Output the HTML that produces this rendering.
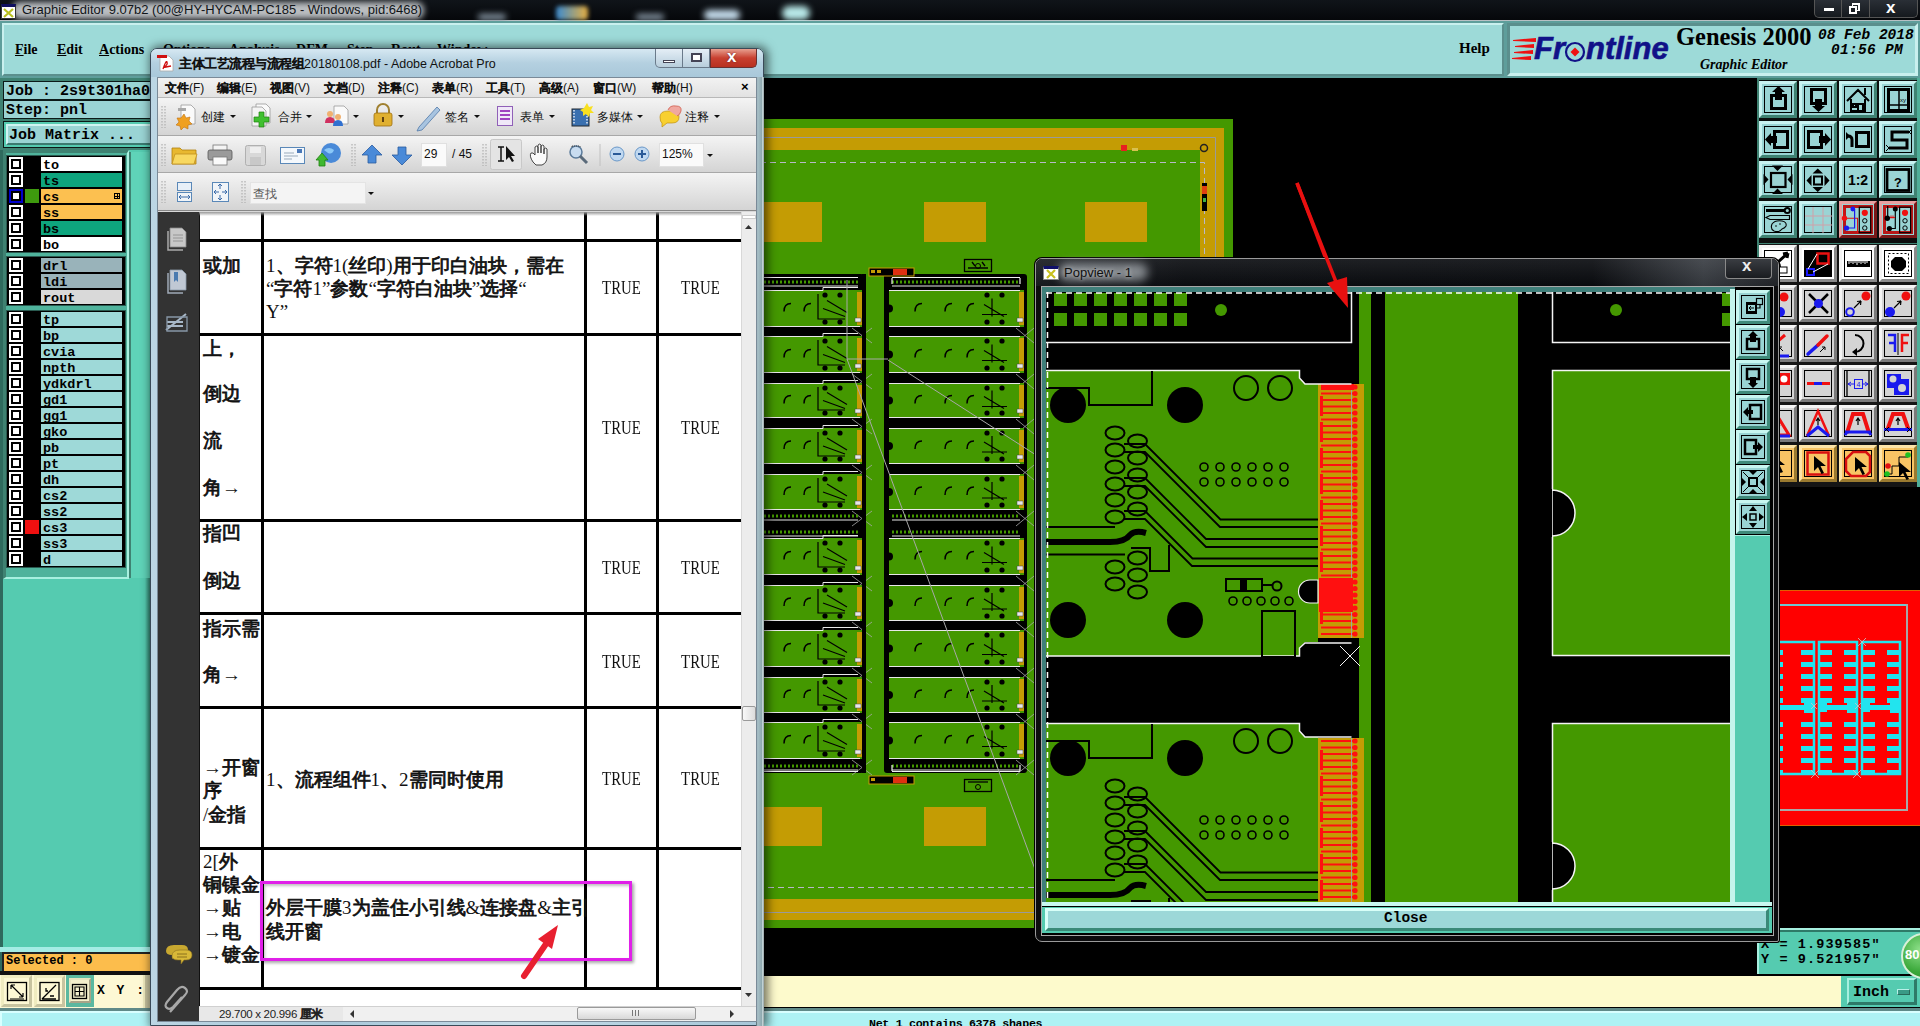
<!DOCTYPE html>
<html><head><meta charset="utf-8">
<style>
*{box-sizing:border-box;margin:0;padding:0}
html,body{width:1920px;height:1026px;overflow:hidden;background:#000;position:relative;font-family:"Liberation Sans",sans-serif}
.a{position:absolute}
.mono{font-family:"Liberation Mono",monospace;font-weight:bold}
.serif{font-family:"Liberation Serif",serif}
.nw{white-space:nowrap}
.c{display:inline-block;width:1em;font-style:normal;text-align:center;-webkit-text-stroke:0.8px currentColor;font-family:"Liberation Sans",sans-serif}
</style></head><body>

<!-- ===== main canvas svg ===== -->
<svg class="a" style="left:0;top:0" width="1920" height="1026" viewBox="0 0 1920 1026">
  <rect x="0" y="0" width="1920" height="1026" fill="#000"/>
  <!-- main board -->
<rect x="600" y="119" width="633" height="809" fill="#449800"/>
<rect x="600" y="128" width="624" height="22" fill="#c49c04"/>
<rect x="1200" y="128" width="24" height="792" fill="#c49c04"/>
<rect x="600" y="899" width="624" height="21" fill="#c49c04"/>
<path d="M600 137.5 H1215.5 V912.5 H600" fill="none" stroke="#9a9a9a" stroke-width="1"/>
<path d="M600 162.5 H1204.5 V887.5 H600" fill="none" stroke="#b8b8c8" stroke-width="1" stroke-dasharray="6 4"/>
<rect x="760" y="202" width="62" height="40" fill="#c49c04"/>
<rect x="924" y="202" width="62" height="40" fill="#c49c04"/>
<rect x="1085" y="202" width="62" height="40" fill="#c49c04"/>
<rect x="760" y="807" width="62" height="39" fill="#c49c04"/>
<rect x="924" y="807" width="62" height="39" fill="#c49c04"/>
<rect x="1085" y="807" width="62" height="39" fill="#c49c04"/>
<rect x="1121" y="145" width="6" height="6" fill="#e82020"/><rect x="1132" y="148" width="6" height="3" fill="#d8c050"/>
<circle cx="1204" cy="148" r="3.5" fill="none" stroke="#222" stroke-width="1.5"/>
<rect x="1202" y="183" width="5" height="28" fill="#000"/><rect x="1202" y="186" width="5" height="8" fill="#e04010"/><rect x="1203" y="198" width="3" height="4" fill="#40b040"/>
<rect x="600" y="274" width="264" height="499" fill="#000" rx="3"/>
<rect x="884" y="274" width="143" height="499" fill="#000" rx="3"/>
<rect x="866" y="274" width="18" height="499" fill="#449800"/>
<rect x="600" y="290" width="262" height="37" fill="#449800"/>
<rect x="889" y="290" width="135" height="37" fill="#449800"/>
<rect x="857" y="292" width="5" height="33" fill="#c49c04"/>
<rect x="1019" y="292" width="5" height="33" fill="#c49c04"/>
<path d="M600 290.5 H823 M823 290.5 v-3 M823 287.5 H858 M889 290.5 H1020 M600 326.5 H860 M889 326.5 H1020" stroke="#e8e8e8" stroke-width="1" fill="none"/>
<path d="M791.0 303.5 Q784.0 303.5 784.0 311.5" fill="none" stroke="#000" stroke-width="1.5"/>
<path d="M811.0 303.5 Q804.0 303.5 804.0 311.5" fill="none" stroke="#000" stroke-width="1.5"/>
<path d="M922.0 303.5 Q915.0 303.5 915.0 311.5" fill="none" stroke="#000" stroke-width="1.5"/>
<path d="M952.0 303.5 Q945.0 303.5 945.0 311.5" fill="none" stroke="#000" stroke-width="1.5"/>
<path d="M974.0 303.5 Q967.0 303.5 967.0 311.5" fill="none" stroke="#000" stroke-width="1.5"/>
<circle cx="825" cy="295" r="2.6" fill="#000"/><circle cx="825" cy="322" r="2.6" fill="#000"/>
<circle cx="840" cy="295" r="2.6" fill="#000"/><circle cx="840" cy="322" r="2.6" fill="#000"/>
<circle cx="987" cy="295" r="2.6" fill="#000"/><circle cx="987" cy="322" r="2.6" fill="#000"/>
<circle cx="1002" cy="295" r="2.6" fill="#000"/><circle cx="1002" cy="322" r="2.6" fill="#000"/>
<path d="M818 294 V319 H845 M823 308.5 L845 316.5 M827 300.5 L847 312.5 M982 314.5 H1007 M984 304.5 L1004 316.5 M992 298.5 V316.5" fill="none" stroke="#000" stroke-width="1.2"/>
<path d="M855 318 h6 v4 h-6z M1017 318 h6 v4 h-6z" fill="#e8e8e8" stroke="#444" stroke-width="0.5"/>
<circle cx="889" cy="308.5" r="4" fill="#000"/>
<path d="M852 328 L872 343 M852 343 L872 328 M1016 328 L1034 343 M1016 343 L1034 328" stroke="#aaa" stroke-width="0.8"/>
<rect x="600" y="336" width="262" height="37" fill="#449800"/>
<rect x="889" y="336" width="135" height="37" fill="#449800"/>
<rect x="857" y="338" width="5" height="33" fill="#c49c04"/>
<rect x="1019" y="338" width="5" height="33" fill="#c49c04"/>
<path d="M600 336.5 H823 M823 336.5 v-3 M823 333.5 H858 M889 336.5 H1020 M600 372.5 H860 M889 372.5 H1020" stroke="#e8e8e8" stroke-width="1" fill="none"/>
<path d="M791.0 349.5 Q784.0 349.5 784.0 357.5" fill="none" stroke="#000" stroke-width="1.5"/>
<path d="M811.0 349.5 Q804.0 349.5 804.0 357.5" fill="none" stroke="#000" stroke-width="1.5"/>
<path d="M922.0 349.5 Q915.0 349.5 915.0 357.5" fill="none" stroke="#000" stroke-width="1.5"/>
<path d="M952.0 349.5 Q945.0 349.5 945.0 357.5" fill="none" stroke="#000" stroke-width="1.5"/>
<path d="M974.0 349.5 Q967.0 349.5 967.0 357.5" fill="none" stroke="#000" stroke-width="1.5"/>
<circle cx="825" cy="341" r="2.6" fill="#000"/><circle cx="825" cy="368" r="2.6" fill="#000"/>
<circle cx="840" cy="341" r="2.6" fill="#000"/><circle cx="840" cy="368" r="2.6" fill="#000"/>
<circle cx="987" cy="341" r="2.6" fill="#000"/><circle cx="987" cy="368" r="2.6" fill="#000"/>
<circle cx="1002" cy="341" r="2.6" fill="#000"/><circle cx="1002" cy="368" r="2.6" fill="#000"/>
<path d="M818 340 V365 H845 M823 354.5 L845 362.5 M827 346.5 L847 358.5 M982 360.5 H1007 M984 350.5 L1004 362.5 M992 344.5 V362.5" fill="none" stroke="#000" stroke-width="1.2"/>
<path d="M855 364 h6 v4 h-6z M1017 364 h6 v4 h-6z" fill="#e8e8e8" stroke="#444" stroke-width="0.5"/>
<circle cx="889" cy="354.5" r="4" fill="#000"/>
<path d="M852 374 L872 389 M852 389 L872 374 M1016 374 L1034 389 M1016 389 L1034 374" stroke="#aaa" stroke-width="0.8"/>
<rect x="600" y="383" width="262" height="35" fill="#449800"/>
<rect x="889" y="383" width="135" height="35" fill="#449800"/>
<rect x="857" y="385" width="5" height="31" fill="#c49c04"/>
<rect x="1019" y="385" width="5" height="31" fill="#c49c04"/>
<path d="M600 383.5 H823 M823 383.5 v-3 M823 380.5 H858 M889 383.5 H1020 M600 417.5 H860 M889 417.5 H1020" stroke="#e8e8e8" stroke-width="1" fill="none"/>
<path d="M791.0 395.5 Q784.0 395.5 784.0 403.5" fill="none" stroke="#000" stroke-width="1.5"/>
<path d="M811.0 395.5 Q804.0 395.5 804.0 403.5" fill="none" stroke="#000" stroke-width="1.5"/>
<path d="M922.0 395.5 Q915.0 395.5 915.0 403.5" fill="none" stroke="#000" stroke-width="1.5"/>
<path d="M952.0 395.5 Q945.0 395.5 945.0 403.5" fill="none" stroke="#000" stroke-width="1.5"/>
<path d="M974.0 395.5 Q967.0 395.5 967.0 403.5" fill="none" stroke="#000" stroke-width="1.5"/>
<circle cx="825" cy="388" r="2.6" fill="#000"/><circle cx="825" cy="413" r="2.6" fill="#000"/>
<circle cx="840" cy="388" r="2.6" fill="#000"/><circle cx="840" cy="413" r="2.6" fill="#000"/>
<circle cx="987" cy="388" r="2.6" fill="#000"/><circle cx="987" cy="413" r="2.6" fill="#000"/>
<circle cx="1002" cy="388" r="2.6" fill="#000"/><circle cx="1002" cy="413" r="2.6" fill="#000"/>
<path d="M818 387 V410 H845 M823 400.5 L845 408.5 M827 392.5 L847 404.5 M982 406.5 H1007 M984 396.5 L1004 408.5 M992 390.5 V408.5" fill="none" stroke="#000" stroke-width="1.2"/>
<path d="M855 409 h6 v4 h-6z M1017 409 h6 v4 h-6z" fill="#e8e8e8" stroke="#444" stroke-width="0.5"/>
<circle cx="889" cy="400.5" r="4" fill="#000"/>
<path d="M852 419 L872 434 M852 434 L872 419 M1016 419 L1034 434 M1016 434 L1034 419" stroke="#aaa" stroke-width="0.8"/>
<rect x="600" y="428" width="262" height="36" fill="#449800"/>
<rect x="889" y="428" width="135" height="36" fill="#449800"/>
<rect x="857" y="430" width="5" height="32" fill="#c49c04"/>
<rect x="1019" y="430" width="5" height="32" fill="#c49c04"/>
<path d="M600 428.5 H823 M823 428.5 v-3 M823 425.5 H858 M889 428.5 H1020 M600 463.5 H860 M889 463.5 H1020" stroke="#e8e8e8" stroke-width="1" fill="none"/>
<path d="M791.0 441.0 Q784.0 441.0 784.0 449.0" fill="none" stroke="#000" stroke-width="1.5"/>
<path d="M811.0 441.0 Q804.0 441.0 804.0 449.0" fill="none" stroke="#000" stroke-width="1.5"/>
<path d="M922.0 441.0 Q915.0 441.0 915.0 449.0" fill="none" stroke="#000" stroke-width="1.5"/>
<path d="M952.0 441.0 Q945.0 441.0 945.0 449.0" fill="none" stroke="#000" stroke-width="1.5"/>
<path d="M974.0 441.0 Q967.0 441.0 967.0 449.0" fill="none" stroke="#000" stroke-width="1.5"/>
<circle cx="825" cy="433" r="2.6" fill="#000"/><circle cx="825" cy="459" r="2.6" fill="#000"/>
<circle cx="840" cy="433" r="2.6" fill="#000"/><circle cx="840" cy="459" r="2.6" fill="#000"/>
<circle cx="987" cy="433" r="2.6" fill="#000"/><circle cx="987" cy="459" r="2.6" fill="#000"/>
<circle cx="1002" cy="433" r="2.6" fill="#000"/><circle cx="1002" cy="459" r="2.6" fill="#000"/>
<path d="M818 432 V456 H845 M823 446.0 L845 454.0 M827 438.0 L847 450.0 M982 452.0 H1007 M984 442.0 L1004 454.0 M992 436.0 V454.0" fill="none" stroke="#000" stroke-width="1.2"/>
<path d="M855 455 h6 v4 h-6z M1017 455 h6 v4 h-6z" fill="#e8e8e8" stroke="#444" stroke-width="0.5"/>
<circle cx="889" cy="446.0" r="4" fill="#000"/>
<path d="M852 465 L872 480 M852 480 L872 465 M1016 465 L1034 480 M1016 480 L1034 465" stroke="#aaa" stroke-width="0.8"/>
<rect x="600" y="474" width="262" height="36" fill="#449800"/>
<rect x="889" y="474" width="135" height="36" fill="#449800"/>
<rect x="857" y="476" width="5" height="32" fill="#c49c04"/>
<rect x="1019" y="476" width="5" height="32" fill="#c49c04"/>
<path d="M600 474.5 H823 M823 474.5 v-3 M823 471.5 H858 M889 474.5 H1020 M600 509.5 H860 M889 509.5 H1020" stroke="#e8e8e8" stroke-width="1" fill="none"/>
<path d="M791.0 487.0 Q784.0 487.0 784.0 495.0" fill="none" stroke="#000" stroke-width="1.5"/>
<path d="M811.0 487.0 Q804.0 487.0 804.0 495.0" fill="none" stroke="#000" stroke-width="1.5"/>
<path d="M922.0 487.0 Q915.0 487.0 915.0 495.0" fill="none" stroke="#000" stroke-width="1.5"/>
<path d="M952.0 487.0 Q945.0 487.0 945.0 495.0" fill="none" stroke="#000" stroke-width="1.5"/>
<path d="M974.0 487.0 Q967.0 487.0 967.0 495.0" fill="none" stroke="#000" stroke-width="1.5"/>
<circle cx="825" cy="479" r="2.6" fill="#000"/><circle cx="825" cy="505" r="2.6" fill="#000"/>
<circle cx="840" cy="479" r="2.6" fill="#000"/><circle cx="840" cy="505" r="2.6" fill="#000"/>
<circle cx="987" cy="479" r="2.6" fill="#000"/><circle cx="987" cy="505" r="2.6" fill="#000"/>
<circle cx="1002" cy="479" r="2.6" fill="#000"/><circle cx="1002" cy="505" r="2.6" fill="#000"/>
<path d="M818 478 V502 H845 M823 492.0 L845 500.0 M827 484.0 L847 496.0 M982 498.0 H1007 M984 488.0 L1004 500.0 M992 482.0 V500.0" fill="none" stroke="#000" stroke-width="1.2"/>
<path d="M855 501 h6 v4 h-6z M1017 501 h6 v4 h-6z" fill="#e8e8e8" stroke="#444" stroke-width="0.5"/>
<circle cx="889" cy="492.0" r="4" fill="#000"/>
<path d="M852 511 L872 526 M852 526 L872 511 M1016 511 L1034 526 M1016 526 L1034 511" stroke="#aaa" stroke-width="0.8"/>
<rect x="600" y="538" width="262" height="37" fill="#449800"/>
<rect x="889" y="538" width="135" height="37" fill="#449800"/>
<rect x="857" y="540" width="5" height="33" fill="#c49c04"/>
<rect x="1019" y="540" width="5" height="33" fill="#c49c04"/>
<path d="M600 538.5 H823 M823 538.5 v-3 M823 535.5 H858 M889 538.5 H1020 M600 574.5 H860 M889 574.5 H1020" stroke="#e8e8e8" stroke-width="1" fill="none"/>
<path d="M791.0 551.5 Q784.0 551.5 784.0 559.5" fill="none" stroke="#000" stroke-width="1.5"/>
<path d="M811.0 551.5 Q804.0 551.5 804.0 559.5" fill="none" stroke="#000" stroke-width="1.5"/>
<path d="M922.0 551.5 Q915.0 551.5 915.0 559.5" fill="none" stroke="#000" stroke-width="1.5"/>
<path d="M952.0 551.5 Q945.0 551.5 945.0 559.5" fill="none" stroke="#000" stroke-width="1.5"/>
<path d="M974.0 551.5 Q967.0 551.5 967.0 559.5" fill="none" stroke="#000" stroke-width="1.5"/>
<circle cx="825" cy="543" r="2.6" fill="#000"/><circle cx="825" cy="570" r="2.6" fill="#000"/>
<circle cx="840" cy="543" r="2.6" fill="#000"/><circle cx="840" cy="570" r="2.6" fill="#000"/>
<circle cx="987" cy="543" r="2.6" fill="#000"/><circle cx="987" cy="570" r="2.6" fill="#000"/>
<circle cx="1002" cy="543" r="2.6" fill="#000"/><circle cx="1002" cy="570" r="2.6" fill="#000"/>
<path d="M818 542 V567 H845 M823 556.5 L845 564.5 M827 548.5 L847 560.5 M982 562.5 H1007 M984 552.5 L1004 564.5 M992 546.5 V564.5" fill="none" stroke="#000" stroke-width="1.2"/>
<path d="M855 566 h6 v4 h-6z M1017 566 h6 v4 h-6z" fill="#e8e8e8" stroke="#444" stroke-width="0.5"/>
<circle cx="889" cy="556.5" r="4" fill="#000"/>
<path d="M852 576 L872 591 M852 591 L872 576 M1016 576 L1034 591 M1016 591 L1034 576" stroke="#aaa" stroke-width="0.8"/>
<rect x="600" y="585" width="262" height="36" fill="#449800"/>
<rect x="889" y="585" width="135" height="36" fill="#449800"/>
<rect x="857" y="587" width="5" height="32" fill="#c49c04"/>
<rect x="1019" y="587" width="5" height="32" fill="#c49c04"/>
<path d="M600 585.5 H823 M823 585.5 v-3 M823 582.5 H858 M889 585.5 H1020 M600 620.5 H860 M889 620.5 H1020" stroke="#e8e8e8" stroke-width="1" fill="none"/>
<path d="M791.0 598.0 Q784.0 598.0 784.0 606.0" fill="none" stroke="#000" stroke-width="1.5"/>
<path d="M811.0 598.0 Q804.0 598.0 804.0 606.0" fill="none" stroke="#000" stroke-width="1.5"/>
<path d="M922.0 598.0 Q915.0 598.0 915.0 606.0" fill="none" stroke="#000" stroke-width="1.5"/>
<path d="M952.0 598.0 Q945.0 598.0 945.0 606.0" fill="none" stroke="#000" stroke-width="1.5"/>
<path d="M974.0 598.0 Q967.0 598.0 967.0 606.0" fill="none" stroke="#000" stroke-width="1.5"/>
<circle cx="825" cy="590" r="2.6" fill="#000"/><circle cx="825" cy="616" r="2.6" fill="#000"/>
<circle cx="840" cy="590" r="2.6" fill="#000"/><circle cx="840" cy="616" r="2.6" fill="#000"/>
<circle cx="987" cy="590" r="2.6" fill="#000"/><circle cx="987" cy="616" r="2.6" fill="#000"/>
<circle cx="1002" cy="590" r="2.6" fill="#000"/><circle cx="1002" cy="616" r="2.6" fill="#000"/>
<path d="M818 589 V613 H845 M823 603.0 L845 611.0 M827 595.0 L847 607.0 M982 609.0 H1007 M984 599.0 L1004 611.0 M992 593.0 V611.0" fill="none" stroke="#000" stroke-width="1.2"/>
<path d="M855 612 h6 v4 h-6z M1017 612 h6 v4 h-6z" fill="#e8e8e8" stroke="#444" stroke-width="0.5"/>
<circle cx="889" cy="603.0" r="4" fill="#000"/>
<path d="M852 622 L872 637 M852 637 L872 622 M1016 622 L1034 637 M1016 637 L1034 622" stroke="#aaa" stroke-width="0.8"/>
<rect x="600" y="630" width="262" height="37" fill="#449800"/>
<rect x="889" y="630" width="135" height="37" fill="#449800"/>
<rect x="857" y="632" width="5" height="33" fill="#c49c04"/>
<rect x="1019" y="632" width="5" height="33" fill="#c49c04"/>
<path d="M600 630.5 H823 M823 630.5 v-3 M823 627.5 H858 M889 630.5 H1020 M600 666.5 H860 M889 666.5 H1020" stroke="#e8e8e8" stroke-width="1" fill="none"/>
<path d="M791.0 643.5 Q784.0 643.5 784.0 651.5" fill="none" stroke="#000" stroke-width="1.5"/>
<path d="M811.0 643.5 Q804.0 643.5 804.0 651.5" fill="none" stroke="#000" stroke-width="1.5"/>
<path d="M922.0 643.5 Q915.0 643.5 915.0 651.5" fill="none" stroke="#000" stroke-width="1.5"/>
<path d="M952.0 643.5 Q945.0 643.5 945.0 651.5" fill="none" stroke="#000" stroke-width="1.5"/>
<path d="M974.0 643.5 Q967.0 643.5 967.0 651.5" fill="none" stroke="#000" stroke-width="1.5"/>
<circle cx="825" cy="635" r="2.6" fill="#000"/><circle cx="825" cy="662" r="2.6" fill="#000"/>
<circle cx="840" cy="635" r="2.6" fill="#000"/><circle cx="840" cy="662" r="2.6" fill="#000"/>
<circle cx="987" cy="635" r="2.6" fill="#000"/><circle cx="987" cy="662" r="2.6" fill="#000"/>
<circle cx="1002" cy="635" r="2.6" fill="#000"/><circle cx="1002" cy="662" r="2.6" fill="#000"/>
<path d="M818 634 V659 H845 M823 648.5 L845 656.5 M827 640.5 L847 652.5 M982 654.5 H1007 M984 644.5 L1004 656.5 M992 638.5 V656.5" fill="none" stroke="#000" stroke-width="1.2"/>
<path d="M855 658 h6 v4 h-6z M1017 658 h6 v4 h-6z" fill="#e8e8e8" stroke="#444" stroke-width="0.5"/>
<circle cx="889" cy="648.5" r="4" fill="#000"/>
<path d="M852 668 L872 683 M852 683 L872 668 M1016 668 L1034 683 M1016 683 L1034 668" stroke="#aaa" stroke-width="0.8"/>
<rect x="600" y="677" width="262" height="36" fill="#449800"/>
<rect x="889" y="677" width="135" height="36" fill="#449800"/>
<rect x="857" y="679" width="5" height="32" fill="#c49c04"/>
<rect x="1019" y="679" width="5" height="32" fill="#c49c04"/>
<path d="M600 677.5 H823 M823 677.5 v-3 M823 674.5 H858 M889 677.5 H1020 M600 712.5 H860 M889 712.5 H1020" stroke="#e8e8e8" stroke-width="1" fill="none"/>
<path d="M791.0 690.0 Q784.0 690.0 784.0 698.0" fill="none" stroke="#000" stroke-width="1.5"/>
<path d="M811.0 690.0 Q804.0 690.0 804.0 698.0" fill="none" stroke="#000" stroke-width="1.5"/>
<path d="M922.0 690.0 Q915.0 690.0 915.0 698.0" fill="none" stroke="#000" stroke-width="1.5"/>
<path d="M952.0 690.0 Q945.0 690.0 945.0 698.0" fill="none" stroke="#000" stroke-width="1.5"/>
<path d="M974.0 690.0 Q967.0 690.0 967.0 698.0" fill="none" stroke="#000" stroke-width="1.5"/>
<circle cx="825" cy="682" r="2.6" fill="#000"/><circle cx="825" cy="708" r="2.6" fill="#000"/>
<circle cx="840" cy="682" r="2.6" fill="#000"/><circle cx="840" cy="708" r="2.6" fill="#000"/>
<circle cx="987" cy="682" r="2.6" fill="#000"/><circle cx="987" cy="708" r="2.6" fill="#000"/>
<circle cx="1002" cy="682" r="2.6" fill="#000"/><circle cx="1002" cy="708" r="2.6" fill="#000"/>
<path d="M818 681 V705 H845 M823 695.0 L845 703.0 M827 687.0 L847 699.0 M982 701.0 H1007 M984 691.0 L1004 703.0 M992 685.0 V703.0" fill="none" stroke="#000" stroke-width="1.2"/>
<path d="M855 704 h6 v4 h-6z M1017 704 h6 v4 h-6z" fill="#e8e8e8" stroke="#444" stroke-width="0.5"/>
<circle cx="889" cy="695.0" r="4" fill="#000"/>
<path d="M852 714 L872 729 M852 729 L872 714 M1016 714 L1034 729 M1016 729 L1034 714" stroke="#aaa" stroke-width="0.8"/>
<rect x="600" y="722" width="262" height="37" fill="#449800"/>
<rect x="889" y="722" width="135" height="37" fill="#449800"/>
<rect x="857" y="724" width="5" height="33" fill="#c49c04"/>
<rect x="1019" y="724" width="5" height="33" fill="#c49c04"/>
<path d="M600 722.5 H823 M823 722.5 v-3 M823 719.5 H858 M889 722.5 H1020 M600 758.5 H860 M889 758.5 H1020" stroke="#e8e8e8" stroke-width="1" fill="none"/>
<path d="M791.0 735.5 Q784.0 735.5 784.0 743.5" fill="none" stroke="#000" stroke-width="1.5"/>
<path d="M811.0 735.5 Q804.0 735.5 804.0 743.5" fill="none" stroke="#000" stroke-width="1.5"/>
<path d="M922.0 735.5 Q915.0 735.5 915.0 743.5" fill="none" stroke="#000" stroke-width="1.5"/>
<path d="M952.0 735.5 Q945.0 735.5 945.0 743.5" fill="none" stroke="#000" stroke-width="1.5"/>
<path d="M974.0 735.5 Q967.0 735.5 967.0 743.5" fill="none" stroke="#000" stroke-width="1.5"/>
<circle cx="825" cy="727" r="2.6" fill="#000"/><circle cx="825" cy="754" r="2.6" fill="#000"/>
<circle cx="840" cy="727" r="2.6" fill="#000"/><circle cx="840" cy="754" r="2.6" fill="#000"/>
<circle cx="987" cy="727" r="2.6" fill="#000"/><circle cx="987" cy="754" r="2.6" fill="#000"/>
<circle cx="1002" cy="727" r="2.6" fill="#000"/><circle cx="1002" cy="754" r="2.6" fill="#000"/>
<path d="M818 726 V751 H845 M823 740.5 L845 748.5 M827 732.5 L847 744.5 M982 746.5 H1007 M984 736.5 L1004 748.5 M992 730.5 V748.5" fill="none" stroke="#000" stroke-width="1.2"/>
<path d="M855 750 h6 v4 h-6z M1017 750 h6 v4 h-6z" fill="#e8e8e8" stroke="#444" stroke-width="0.5"/>
<circle cx="889" cy="740.5" r="4" fill="#000"/>
<path d="M852 760 L872 775 M852 775 L872 760 M1016 760 L1034 775 M1016 775 L1034 760" stroke="#aaa" stroke-width="0.8"/>
<path d="M604 282 H858 M892 282 H1020" stroke="#449800" stroke-width="3" stroke-dasharray="2 2"/>
<path d="M604 286 H858 M892 286 H1020" stroke="#e8e8e8" stroke-width="1"/>
<path d="M604 516 H858 M892 516 H1020" stroke="#449800" stroke-width="3" stroke-dasharray="2 2"/>
<path d="M604 520 H858 M892 520 H1020" stroke="#e8e8e8" stroke-width="1"/>
<path d="M604 532 H858 M892 532 H1020" stroke="#449800" stroke-width="3" stroke-dasharray="2 2"/>
<path d="M604 536 H858 M892 536 H1020" stroke="#e8e8e8" stroke-width="1"/>
<path d="M604 766 H858 M892 766 H1020" stroke="#449800" stroke-width="3" stroke-dasharray="2 2"/>
<path d="M604 770 H858 M892 770 H1020" stroke="#e8e8e8" stroke-width="1"/>
<rect x="862" y="274" width="4" height="499" fill="#000"/>
<rect x="869" y="268" width="45" height="8" fill="#000" stroke="#c49c04" stroke-width="1"/><rect x="871" y="270" width="4" height="3" fill="#c49c04"/><rect x="877" y="270" width="4" height="3" fill="#c49c04"/><rect x="893" y="269" width="14" height="6" fill="#e03010"/>
<rect x="869" y="776" width="45" height="8" fill="#000" stroke="#c49c04" stroke-width="1"/><rect x="871" y="778" width="4" height="3" fill="#c49c04"/><rect x="893" y="777" width="14" height="6" fill="#e03010"/>
<rect x="964.5" y="259.5" width="27" height="12" fill="none" stroke="#000" stroke-width="1.3"/><path d="M968 268 h20 M972 262 l3 4 M982 262 l3 4" stroke="#000" stroke-width="1.3"/><circle cx="978" cy="266" r="2.5" fill="none" stroke="#000"/>
<rect x="964.5" y="779.5" width="27" height="12" fill="none" stroke="#000" stroke-width="1.3"/><path d="M968 782 h20" stroke="#000" stroke-width="1.3"/><circle cx="978" cy="787" r="2.5" fill="none" stroke="#000"/>
<path d="M600 771.5 H858 M892 771.5 H1020 M892 277.5 H1020 M600 277.5 H858 M1020 278 v6 M1020 771 v-6 M892 278 v6 M892 771 v-6" stroke="#f0f0f0" stroke-width="1.2" fill="none"/>
<path d="M847 280 V359 H888 M847 359 L1036 872 M888 360 L1036 455" stroke="#a8a8a8" stroke-width="1" fill="none"/>
<path d="M1297 183 L1337 288" stroke="#e81010" stroke-width="3.5"/><path d="M1347 308 L1326 284 L1344 278Z" fill="#e81010"/>
</svg>

<svg class="a" style="left:1760px;top:585px" width="160" height="245" viewBox="1760 585 160 245">
<rect x="1760" y="590" width="160" height="236" fill="#ff0000"/>
<path d="M1760 590.5 H1920 M1760 825.5 H1920" stroke="#e06000" stroke-width="1"/>
<rect x="1755" y="605" width="152" height="205" fill="none" stroke="#a8a8a8" stroke-width="2"/>
<path d="M1760 605 H1906" stroke="#70c8d0" stroke-width="2"/>
<rect x="1770" y="642" width="44" height="132" fill="none" stroke="#22e4ee" stroke-width="2.5"/>
<rect x="1770" y="650" width="13" height="5" fill="#22e4ee"/><rect x="1801" y="650" width="13" height="5" fill="#22e4ee"/>

<rect x="1770" y="662" width="13" height="5" fill="#22e4ee"/><rect x="1801" y="662" width="13" height="5" fill="#22e4ee"/>

<rect x="1770" y="674" width="13" height="5" fill="#22e4ee"/><rect x="1801" y="674" width="13" height="5" fill="#22e4ee"/>

<rect x="1770" y="686" width="13" height="5" fill="#22e4ee"/><rect x="1801" y="686" width="13" height="5" fill="#22e4ee"/>

<rect x="1770" y="698" width="13" height="5" fill="#22e4ee"/><rect x="1801" y="698" width="13" height="5" fill="#22e4ee"/>

<rect x="1770" y="722" width="13" height="5" fill="#22e4ee"/><rect x="1801" y="722" width="13" height="5" fill="#22e4ee"/>

<rect x="1770" y="734" width="13" height="5" fill="#22e4ee"/><rect x="1801" y="734" width="13" height="5" fill="#22e4ee"/>

<rect x="1770" y="746" width="13" height="5" fill="#22e4ee"/><rect x="1801" y="746" width="13" height="5" fill="#22e4ee"/>

<rect x="1770" y="758" width="13" height="5" fill="#22e4ee"/><rect x="1801" y="758" width="13" height="5" fill="#22e4ee"/>

<rect x="1770" y="770" width="13" height="5" fill="#22e4ee"/><rect x="1801" y="770" width="13" height="5" fill="#22e4ee"/>

<rect x="1770" y="705" width="44" height="5" fill="#22e4ee"/>
<rect x="1770" y="702" width="8" height="10" fill="#22e4ee"/><rect x="1804" y="701" width="10" height="12" fill="#22e4ee"/>
<rect x="1819" y="642" width="38" height="132" fill="none" stroke="#22e4ee" stroke-width="2.5"/>
<rect x="1819" y="650" width="13" height="5" fill="#22e4ee"/><rect x="1844" y="650" width="13" height="5" fill="#22e4ee"/>

<rect x="1819" y="662" width="13" height="5" fill="#22e4ee"/><rect x="1844" y="662" width="13" height="5" fill="#22e4ee"/>

<rect x="1819" y="674" width="13" height="5" fill="#22e4ee"/><rect x="1844" y="674" width="13" height="5" fill="#22e4ee"/>

<rect x="1819" y="686" width="13" height="5" fill="#22e4ee"/><rect x="1844" y="686" width="13" height="5" fill="#22e4ee"/>

<rect x="1819" y="698" width="13" height="5" fill="#22e4ee"/><rect x="1844" y="698" width="13" height="5" fill="#22e4ee"/>

<rect x="1819" y="722" width="13" height="5" fill="#22e4ee"/><rect x="1844" y="722" width="13" height="5" fill="#22e4ee"/>

<rect x="1819" y="734" width="13" height="5" fill="#22e4ee"/><rect x="1844" y="734" width="13" height="5" fill="#22e4ee"/>

<rect x="1819" y="746" width="13" height="5" fill="#22e4ee"/><rect x="1844" y="746" width="13" height="5" fill="#22e4ee"/>

<rect x="1819" y="758" width="13" height="5" fill="#22e4ee"/><rect x="1844" y="758" width="13" height="5" fill="#22e4ee"/>

<rect x="1819" y="770" width="13" height="5" fill="#22e4ee"/><rect x="1844" y="770" width="13" height="5" fill="#22e4ee"/>

<rect x="1819" y="705" width="38" height="5" fill="#22e4ee"/>
<rect x="1819" y="702" width="8" height="10" fill="#22e4ee"/><rect x="1847" y="701" width="10" height="12" fill="#22e4ee"/>
<rect x="1862" y="642" width="38" height="132" fill="none" stroke="#22e4ee" stroke-width="2.5"/>
<rect x="1862" y="650" width="13" height="5" fill="#22e4ee"/><rect x="1887" y="650" width="13" height="5" fill="#22e4ee"/>

<rect x="1862" y="662" width="13" height="5" fill="#22e4ee"/><rect x="1887" y="662" width="13" height="5" fill="#22e4ee"/>

<rect x="1862" y="674" width="13" height="5" fill="#22e4ee"/><rect x="1887" y="674" width="13" height="5" fill="#22e4ee"/>

<rect x="1862" y="686" width="13" height="5" fill="#22e4ee"/><rect x="1887" y="686" width="13" height="5" fill="#22e4ee"/>

<rect x="1862" y="698" width="13" height="5" fill="#22e4ee"/><rect x="1887" y="698" width="13" height="5" fill="#22e4ee"/>

<rect x="1862" y="722" width="13" height="5" fill="#22e4ee"/><rect x="1887" y="722" width="13" height="5" fill="#22e4ee"/>

<rect x="1862" y="734" width="13" height="5" fill="#22e4ee"/><rect x="1887" y="734" width="13" height="5" fill="#22e4ee"/>

<rect x="1862" y="746" width="13" height="5" fill="#22e4ee"/><rect x="1887" y="746" width="13" height="5" fill="#22e4ee"/>

<rect x="1862" y="758" width="13" height="5" fill="#22e4ee"/><rect x="1887" y="758" width="13" height="5" fill="#22e4ee"/>

<rect x="1862" y="770" width="13" height="5" fill="#22e4ee"/><rect x="1887" y="770" width="13" height="5" fill="#22e4ee"/>

<rect x="1862" y="705" width="38" height="5" fill="#22e4ee"/>
<rect x="1862" y="702" width="8" height="10" fill="#22e4ee"/><rect x="1890" y="701" width="10" height="12" fill="#22e4ee"/>
<path d="M1858 638 l8 8 m0 -8 l-8 8 M1811 770 l8 8 m0 -8 l-8 8 M1853 770 l8 8 m0 -8 l-8 8 M1811 703 l6 6 m0 -6 l-6 6 M1855 703 l6 6 m0 -6 l-6 6" stroke="#c8c8c8" stroke-width="0.8"/>
</svg>
<!-- ===== bottom bars ===== -->
<div class="a" style="left:151px;top:976px;width:1690px;height:31px;background:#fdfacc;border-left:8px solid #c8c49c"></div>
<div class="a" style="left:1841px;top:976px;width:79px;height:31px;background:#55cbb0"></div>
<div class="a" style="left:1847px;top:978px;width:70px;height:27px;background:#55cbb0;border-top:2px solid #a8f0e0;border-left:2px solid #a8f0e0;border-bottom:3px solid #2e7a68;border-right:3px solid #2e7a68"></div>
<div class="a mono nw" style="left:1853px;top:984px;font-size:15px;color:#000">Inch</div>
<div class="a" style="left:1897px;top:989px;width:13px;height:6px;background:#3a9a86;border:1px solid #b8f0e8;border-right-color:#2a6a5a;border-bottom-color:#2a6a5a"></div>
<div class="a" style="left:0;top:1007px;width:1920px;height:4px;background:#5f8a88;border-top:1px solid #000"></div>
<div class="a" style="left:0;top:1011px;width:1920px;height:15px;background:#aef2f4;border-top:2px solid #d8ffff;border-left:2px solid #d8ffff"></div>
<div class="a mono nw" style="left:869px;top:1017px;font-size:11.7px;letter-spacing:-0.35px;color:#000">Net 1 contains 6378 shapes</div>
<!-- coords -->
<div class="a" style="left:1757px;top:928px;width:163px;height:46px;background:#55cbb0;border-top:2px solid #a8f0e0;border-left:2px solid #a8f0e0"><div class="a" style="left:0;top:0;width:161px;height:2px;background:#2e7a68"></div></div>
<div class="a mono nw" style="left:1761px;top:937px;font-size:13.5px;line-height:15px;color:#000;letter-spacing:1.1px">X = 1.939585"<br>Y = 9.521957"</div>
<div class="a" style="left:1901px;top:933px;width:46px;height:46px;border-radius:50%;background:radial-gradient(circle at 40% 35%,#8ee08a,#3aa83a 60%,#2a8a2a);border:2px solid #d8f0d8"></div>
<div class="a nw" style="left:1905px;top:947px;font-size:13px;font-weight:bold;color:#fff">80</div>

<!-- ===== title bar ===== -->
<div class="a" style="left:0;top:0;width:1920px;height:21px;background:linear-gradient(#101419,#05070a)"></div>
<div class="a" style="left:12px;top:2px;width:412px;height:17px;border-radius:8px;background:rgba(205,208,212,0.9);filter:blur(3px)"></div>
<div class="a" style="left:0;top:20px;width:1920px;height:1px;background:#b8c0c4"></div>
<div class="a" style="left:556px;top:6px;width:32px;height:14px;border-radius:4px;background:linear-gradient(90deg,#3a8ad0,#e8b040);filter:blur(2px)"></div>
<div class="a" style="left:704px;top:10px;width:36px;height:10px;border-radius:6px;background:#c8e0f0;filter:blur(3px)"></div>
<div class="a" style="left:782px;top:6px;width:28px;height:14px;border-radius:7px;background:#b8e8e8;filter:blur(3px)"></div>
<div class="a" style="left:478px;top:14px;width:28px;height:6px;border-radius:4px;background:#8a9aa8;filter:blur(3px)"></div>
<div class="a" style="left:636px;top:14px;width:28px;height:6px;border-radius:4px;background:#8a9aa8;filter:blur(3px)"></div>
<div class="a" style="left:1px;top:4px;width:15px;height:15px;background:#fff;border:1px solid #333;border-top:3px solid #101060"></div>
<svg class="a" style="left:3px;top:8px" width="11" height="10"><path d="M1 1 L10 9 M10 1 L1 9" stroke="#b8c020" stroke-width="2.2"/></svg>
<div class="a nw" style="left:22px;top:2px;font-size:13px;color:#101418">Graphic Editor 9.07b2 (00@HY-HYCAM-PC185 - Windows, pid:6468)</div>

<!-- ===== genesis menubar ===== -->
<div class="a" style="left:0;top:21px;width:1920px;height:57px;background:#5e9e9b"></div>
<div class="a" style="left:2px;top:23px;width:1502px;height:53px;background:#9ddad8;border-top:2px solid #c9f0ee;border-left:2px solid #c9f0ee;border-bottom:2px solid #5b8f8d;border-right:2px solid #5b8f8d"></div>
<div class="a" style="left:1507px;top:23px;width:411px;height:53px;background:#9ddad8;border-top:3px solid #5b8f8d;border-left:3px solid #5b8f8d;border-bottom:3px solid #c9f0ee;border-right:3px solid #c9f0ee"></div>
<div class="a serif nw" style="left:15px;top:42px;font-size:14px;font-weight:bold;color:#000;word-spacing:0">
<span class="a" style="left:0"><u>F</u>ile</span><span class="a" style="left:42px"><u>E</u>dit</span><span class="a" style="left:84px"><u>A</u>ctions</span><span class="a" style="left:148px"><u>O</u>ptions</span><span class="a" style="left:214px"><u>A</u>nalysis</span><span class="a" style="left:281px"><u>D</u>FM</span><span class="a" style="left:332px"><u>S</u>tep</span><span class="a" style="left:376px"><u>R</u>out</span><span class="a" style="left:422px"><u>W</u>indow</span></div>
<div class="a serif nw" style="left:1459px;top:40px;font-size:15px;font-weight:bold">Help</div>
<!-- frontline logo -->
<svg class="a" style="left:1512px;top:38px" width="26" height="25" viewBox="0 0 26 25">
 <path d="M1 2 L24 0 L24 4 L1 3Z M3 8 L22 6 L22 10 L3 9Z M2 14 L21 12 L21 16 L2 15Z M0 20 L19 18 L19 22 L0 21Z" fill="#ee1111"/>
</svg>
<div class="a nw" style="left:1534px;top:31px;font-size:31px;font-weight:bold;font-style:italic;color:#111188;-webkit-text-stroke:0.6px #111188">Fr</div>
<svg class="a" style="left:1563px;top:40px" width="24" height="24" viewBox="0 0 24 24"><circle cx="12" cy="12" r="9" fill="none" stroke="#111188" stroke-width="2.2"/><path d="M12 7.5 L16.5 12 L12 16.5 L7.5 12Z" fill="#ee1111"/></svg>
<div class="a nw" style="left:1586px;top:31px;font-size:31px;font-weight:bold;font-style:italic;color:#111188;-webkit-text-stroke:0.6px #111188">ntline</div>
<div class="a serif nw" style="left:1676px;top:23px;font-size:24.5px;font-weight:bold;color:#000">Genesis 2000</div>
<div class="a serif nw" style="left:1700px;top:57px;font-size:14px;font-weight:bold;font-style:italic;color:#000">Graphic Editor</div>
<div class="a mono nw" style="left:1818px;top:27px;font-size:14.5px;font-style:italic;color:#000;letter-spacing:0">08 Feb 2018</div>
<div class="a mono nw" style="left:1831px;top:42px;font-size:14.5px;font-style:italic;color:#000;letter-spacing:0.3px">01:56 PM</div>
<!-- window buttons -->
<div class="a" style="left:1814px;top:0;width:104px;height:18px;border:1px solid #555;border-top:none;border-radius:0 0 5px 5px;background:linear-gradient(#2a2f36,#15191e)"></div>
<div class="a" style="left:1841px;top:0;width:1px;height:17px;background:#555"></div>
<div class="a" style="left:1869px;top:0;width:1px;height:17px;background:#555"></div>
<div class="a" style="left:1824px;top:8px;width:10px;height:3px;background:#fff"></div>
<div class="a" style="left:1852px;top:3px;width:8px;height:8px;border:2px solid #fff;border-left-width:1px;border-bottom-width:1px"></div><div class="a" style="left:1849px;top:6px;width:8px;height:8px;border:2px solid #fff;background:#1a1e24"></div>
<div class="a nw" style="left:1886px;top:-2px;font-size:17px;font-weight:bold;color:#fff">x</div>

<!-- ===== left panel ===== -->
<div class="a" style="left:0;top:78px;width:151px;height:896px;background:#55cbb0"></div>
<div class="a" style="left:0;top:78px;width:151px;height:72px;background:#3f8272"></div>
<div class="a" style="left:3px;top:81px;width:150px;height:38px;background:#0c1a18"></div>
<div class="a" style="left:4px;top:82px;width:149px;height:17px;background:#9ad4d4"></div>
<div class="a" style="left:4px;top:101px;width:149px;height:17px;background:#9ad4d4"></div>
<div class="a mono nw" style="left:6px;top:83px;font-size:15px;color:#000">Job : 2s9t301ha0</div>
<div class="a mono nw" style="left:6px;top:102px;font-size:15px;color:#000">Step: pnl</div>
<div class="a" style="left:3px;top:121px;width:150px;height:27px;background:#0c1a18"></div>
<div class="a" style="left:4px;top:122px;width:149px;height:25px;background:#55cbb0"></div>
<div class="a" style="left:6px;top:124px;width:147px;height:21px;background:#9ad4d4;border-top:2px solid #d0f4f2;border-left:2px solid #d0f4f2;border-bottom:2px solid #3c7a70"></div>
<div class="a mono nw" style="left:9px;top:127px;font-size:15px;color:#000">Job Matrix ...</div>
<!-- layer list -->
<div class="a" style="left:0;top:150px;width:3px;height:824px;background:#2f6a5e"></div>
<div class="a" style="left:145px;top:578px;width:6px;height:370px;background:linear-gradient(90deg,#55cbb0,#2f7a68)"></div>
<div class="a" style="left:3px;top:150px;width:126px;height:429px;background:#4fb39c;border-top:3px solid #3f8272;border-left:3px solid #3f8272;border-bottom:2px solid #a8f0e0;border-right:2px solid #a8f0e0"></div>
<div class="a" style="left:129px;top:152px;width:20px;height:426px;background:#5fd3b8;border-left:2px solid #3f8272"></div>
<div class="a" style="left:6px;top:155px;width:120px;height:98px;background:#000;border:1px solid #2a5a50"></div>
<div class="a" style="left:9px;top:157px;width:14px;height:14px;background:#fff;border:2px solid #fff"><div class="a" style="left:0;top:0;width:10px;height:10px;border:2px solid #000"></div></div>
<div class="a mono nw" style="left:41px;top:157px;width:81px;height:14px;background:#ffffff;font-size:13.5px;line-height:17px;padding-left:2px;color:#000;overflow:hidden">to</div>
<div class="a" style="left:9px;top:173px;width:14px;height:14px;background:#fff;border:2px solid #fff"><div class="a" style="left:0;top:0;width:10px;height:10px;border:2px solid #000"></div></div>
<div class="a mono nw" style="left:41px;top:173px;width:81px;height:14px;background:#0ea57e;font-size:13.5px;line-height:17px;padding-left:2px;color:#000;overflow:hidden">ts</div>
<div class="a" style="left:9px;top:189px;width:14px;height:14px;background:#fff;border:2px solid #0000cc"><div class="a" style="left:0;top:0;width:10px;height:10px;border:2px solid #000"></div></div>
<div class="a" style="left:25px;top:189px;width:14px;height:14px;background:#3e9a0e"></div>
<div class="a mono nw" style="left:41px;top:189px;width:81px;height:14px;background:#fcc050;font-size:13.5px;line-height:17px;padding-left:2px;color:#000;overflow:hidden">cs</div>
<div class="a" style="left:114px;top:193px;width:6px;height:6px;border:1px solid #000;background:linear-gradient(#000,#000) 2px 0/1px 6px no-repeat,linear-gradient(#000,#000) 0 2px/6px 1px no-repeat"></div>
<div class="a" style="left:9px;top:205px;width:14px;height:14px;background:#fff;border:2px solid #fff"><div class="a" style="left:0;top:0;width:10px;height:10px;border:2px solid #000"></div></div>
<div class="a mono nw" style="left:41px;top:205px;width:81px;height:14px;background:#fcc050;font-size:13.5px;line-height:17px;padding-left:2px;color:#000;overflow:hidden">ss</div>
<div class="a" style="left:9px;top:221px;width:14px;height:14px;background:#fff;border:2px solid #fff"><div class="a" style="left:0;top:0;width:10px;height:10px;border:2px solid #000"></div></div>
<div class="a mono nw" style="left:41px;top:221px;width:81px;height:14px;background:#0ea57e;font-size:13.5px;line-height:17px;padding-left:2px;color:#000;overflow:hidden">bs</div>
<div class="a" style="left:9px;top:237px;width:14px;height:14px;background:#fff;border:2px solid #fff"><div class="a" style="left:0;top:0;width:10px;height:10px;border:2px solid #000"></div></div>
<div class="a mono nw" style="left:41px;top:237px;width:81px;height:14px;background:#ffffff;font-size:13.5px;line-height:17px;padding-left:2px;color:#000;overflow:hidden">bo</div>
<div class="a" style="left:6px;top:256px;width:120px;height:50px;background:#000;border:1px solid #2a5a50"></div>
<div class="a" style="left:9px;top:258px;width:14px;height:14px;background:#fff;border:2px solid #fff"><div class="a" style="left:0;top:0;width:10px;height:10px;border:2px solid #000"></div></div>
<div class="a mono nw" style="left:41px;top:258px;width:81px;height:14px;background:#99b3ba;font-size:13.5px;line-height:17px;padding-left:2px;color:#000;overflow:hidden">drl</div>
<div class="a" style="left:9px;top:274px;width:14px;height:14px;background:#fff;border:2px solid #fff"><div class="a" style="left:0;top:0;width:10px;height:10px;border:2px solid #000"></div></div>
<div class="a mono nw" style="left:41px;top:274px;width:81px;height:14px;background:#99b3ba;font-size:13.5px;line-height:17px;padding-left:2px;color:#000;overflow:hidden">ldi</div>
<div class="a" style="left:9px;top:290px;width:14px;height:14px;background:#fff;border:2px solid #fff"><div class="a" style="left:0;top:0;width:10px;height:10px;border:2px solid #000"></div></div>
<div class="a mono nw" style="left:41px;top:290px;width:81px;height:14px;background:#d9d9d9;font-size:13.5px;line-height:17px;padding-left:2px;color:#000;overflow:hidden">rout</div>
<div class="a" style="left:6px;top:310px;width:120px;height:258px;background:#000;border:1px solid #2a5a50"></div>
<div class="a" style="left:9px;top:312px;width:14px;height:14px;background:#fff;border:2px solid #fff"><div class="a" style="left:0;top:0;width:10px;height:10px;border:2px solid #000"></div></div>
<div class="a mono nw" style="left:41px;top:312px;width:81px;height:14px;background:#9ed9d8;font-size:13.5px;line-height:17px;padding-left:2px;color:#000;overflow:hidden">tp</div>
<div class="a" style="left:9px;top:328px;width:14px;height:14px;background:#fff;border:2px solid #fff"><div class="a" style="left:0;top:0;width:10px;height:10px;border:2px solid #000"></div></div>
<div class="a mono nw" style="left:41px;top:328px;width:81px;height:14px;background:#9ed9d8;font-size:13.5px;line-height:17px;padding-left:2px;color:#000;overflow:hidden">bp</div>
<div class="a" style="left:9px;top:344px;width:14px;height:14px;background:#fff;border:2px solid #fff"><div class="a" style="left:0;top:0;width:10px;height:10px;border:2px solid #000"></div></div>
<div class="a mono nw" style="left:41px;top:344px;width:81px;height:14px;background:#9ed9d8;font-size:13.5px;line-height:17px;padding-left:2px;color:#000;overflow:hidden">cvia</div>
<div class="a" style="left:9px;top:360px;width:14px;height:14px;background:#fff;border:2px solid #fff"><div class="a" style="left:0;top:0;width:10px;height:10px;border:2px solid #000"></div></div>
<div class="a mono nw" style="left:41px;top:360px;width:81px;height:14px;background:#9ed9d8;font-size:13.5px;line-height:17px;padding-left:2px;color:#000;overflow:hidden">npth</div>
<div class="a" style="left:9px;top:376px;width:14px;height:14px;background:#fff;border:2px solid #fff"><div class="a" style="left:0;top:0;width:10px;height:10px;border:2px solid #000"></div></div>
<div class="a mono nw" style="left:41px;top:376px;width:81px;height:14px;background:#9ed9d8;font-size:13.5px;line-height:17px;padding-left:2px;color:#000;overflow:hidden">ydkdrl</div>
<div class="a" style="left:9px;top:392px;width:14px;height:14px;background:#fff;border:2px solid #fff"><div class="a" style="left:0;top:0;width:10px;height:10px;border:2px solid #000"></div></div>
<div class="a mono nw" style="left:41px;top:392px;width:81px;height:14px;background:#9ed9d8;font-size:13.5px;line-height:17px;padding-left:2px;color:#000;overflow:hidden">gd1</div>
<div class="a" style="left:9px;top:408px;width:14px;height:14px;background:#fff;border:2px solid #fff"><div class="a" style="left:0;top:0;width:10px;height:10px;border:2px solid #000"></div></div>
<div class="a mono nw" style="left:41px;top:408px;width:81px;height:14px;background:#9ed9d8;font-size:13.5px;line-height:17px;padding-left:2px;color:#000;overflow:hidden">gg1</div>
<div class="a" style="left:9px;top:424px;width:14px;height:14px;background:#fff;border:2px solid #fff"><div class="a" style="left:0;top:0;width:10px;height:10px;border:2px solid #000"></div></div>
<div class="a mono nw" style="left:41px;top:424px;width:81px;height:14px;background:#9ed9d8;font-size:13.5px;line-height:17px;padding-left:2px;color:#000;overflow:hidden">gko</div>
<div class="a" style="left:9px;top:440px;width:14px;height:14px;background:#fff;border:2px solid #fff"><div class="a" style="left:0;top:0;width:10px;height:10px;border:2px solid #000"></div></div>
<div class="a mono nw" style="left:41px;top:440px;width:81px;height:14px;background:#9ed9d8;font-size:13.5px;line-height:17px;padding-left:2px;color:#000;overflow:hidden">pb</div>
<div class="a" style="left:9px;top:456px;width:14px;height:14px;background:#fff;border:2px solid #fff"><div class="a" style="left:0;top:0;width:10px;height:10px;border:2px solid #000"></div></div>
<div class="a mono nw" style="left:41px;top:456px;width:81px;height:14px;background:#9ed9d8;font-size:13.5px;line-height:17px;padding-left:2px;color:#000;overflow:hidden">pt</div>
<div class="a" style="left:9px;top:472px;width:14px;height:14px;background:#fff;border:2px solid #fff"><div class="a" style="left:0;top:0;width:10px;height:10px;border:2px solid #000"></div></div>
<div class="a mono nw" style="left:41px;top:472px;width:81px;height:14px;background:#9ed9d8;font-size:13.5px;line-height:17px;padding-left:2px;color:#000;overflow:hidden">dh</div>
<div class="a" style="left:9px;top:488px;width:14px;height:14px;background:#fff;border:2px solid #fff"><div class="a" style="left:0;top:0;width:10px;height:10px;border:2px solid #000"></div></div>
<div class="a mono nw" style="left:41px;top:488px;width:81px;height:14px;background:#9ed9d8;font-size:13.5px;line-height:17px;padding-left:2px;color:#000;overflow:hidden">cs2</div>
<div class="a" style="left:9px;top:504px;width:14px;height:14px;background:#fff;border:2px solid #fff"><div class="a" style="left:0;top:0;width:10px;height:10px;border:2px solid #000"></div></div>
<div class="a mono nw" style="left:41px;top:504px;width:81px;height:14px;background:#9ed9d8;font-size:13.5px;line-height:17px;padding-left:2px;color:#000;overflow:hidden">ss2</div>
<div class="a" style="left:9px;top:520px;width:14px;height:14px;background:#fff;border:2px solid #fff"><div class="a" style="left:0;top:0;width:10px;height:10px;border:2px solid #000"></div></div>
<div class="a" style="left:25px;top:520px;width:14px;height:14px;background:#f01010"></div>
<div class="a mono nw" style="left:41px;top:520px;width:81px;height:14px;background:#9ed9d8;font-size:13.5px;line-height:17px;padding-left:2px;color:#000;overflow:hidden">cs3</div>
<div class="a" style="left:9px;top:536px;width:14px;height:14px;background:#fff;border:2px solid #fff"><div class="a" style="left:0;top:0;width:10px;height:10px;border:2px solid #000"></div></div>
<div class="a mono nw" style="left:41px;top:536px;width:81px;height:14px;background:#9ed9d8;font-size:13.5px;line-height:17px;padding-left:2px;color:#000;overflow:hidden">ss3</div>
<div class="a" style="left:9px;top:552px;width:14px;height:14px;background:#fff;border:2px solid #fff"><div class="a" style="left:0;top:0;width:10px;height:10px;border:2px solid #000"></div></div>
<div class="a mono nw" style="left:41px;top:552px;width:81px;height:14px;background:#9ed9d8;font-size:13.5px;line-height:17px;padding-left:2px;color:#000;overflow:hidden">d</div>
<!-- selected -->
<div class="a" style="left:0;top:947px;width:151px;height:5px;background:#a4ece4"></div>
<div class="a" style="left:2px;top:952px;width:149px;height:19px;background:#fcbd4c;border-top:2px solid #222;border-left:2px solid #222"></div>
<div class="a mono nw" style="left:6px;top:954px;font-size:12px;color:#000">Selected : 0</div>
<div class="a" style="left:0;top:971px;width:151px;height:4px;background:#111"></div>
<div class="a" style="left:0;top:975px;width:151px;height:33px;background:#fdf8d4"></div>
<div class="a" style="left:1px;top:975px;width:31px;height:32px;border:3px solid #f0ecc0;border-right-color:#c8c4a0;border-bottom-color:#c8c4a0"></div>
<div class="a" style="left:34px;top:975px;width:31px;height:32px;border:3px solid #f0ecc0;border-right-color:#c8c4a0;border-bottom-color:#c8c4a0"></div>
<div class="a" style="left:66px;top:975px;width:28px;height:32px;background:#5bb8a0"></div>
<div class="a" style="left:69px;top:978px;width:22px;height:25px;background:#f4f0cc;border:2px solid #e8e4c0;border-right-color:#a8a488;border-bottom-color:#a8a488"></div>
<svg class="a" style="left:0;top:975px" width="100" height="33" viewBox="0 0 100 33">
 <rect x="7.5" y="7.5" width="19" height="18" fill="none" stroke="#000" stroke-width="1.3"/>
 <path d="M11 10 L23 22 M11 10 v4 M11 10 h4 M23 22 v-4 M23 22 h-4 M10 24 h14" stroke="#000" stroke-width="1.2" fill="none"/>
 <rect x="40" y="7.5" width="19" height="18" fill="none" stroke="#000" stroke-width="1.3"/>
 <path d="M42 24 L56 10 M42 24 h14 M46 13 v3 h2 M50 21 h4" stroke="#000" stroke-width="1.3" fill="none"/>
 <rect x="72.5" y="9.5" width="14" height="14" fill="none" stroke="#000" stroke-width="1.3"/>
 <path d="M75 12 h9 v9 h-9z M79.5 12 v9 M75 16.5 h9" stroke="#000" stroke-width="1.1" fill="none"/>
</svg>
<div class="a mono nw" style="left:97px;top:983px;font-size:13px;color:#000;letter-spacing:2px">X Y :</div>
<div class="a" style="left:143px;top:975px;width:8px;height:33px;background:#c8c4a0;border-left:2px solid #f0ecc0"></div>

<!-- ===== PDF window ===== -->
<div class="a" style="left:150px;top:48px;width:614px;height:978px;border-radius:7px 7px 0 0;background:linear-gradient(90deg,#bcd6e4 0,#a8c8da 30%,#c4dce8 60%,#a6c6d8 100%);border:1px solid #3a4a58;box-shadow:2px 0 10px 2px rgba(0,0,0,0.55)"></div>
<div class="a" style="left:151px;top:49px;width:612px;height:28px;border-radius:6px 6px 0 0;background:linear-gradient(180deg,#d6e8f2 0,#b4d0e0 50%,#a9c8da 100%)"></div>
<!-- title icon -->
<svg class="a" style="left:157px;top:54px" width="18" height="18" viewBox="0 0 18 18">
 <path d="M3 2 H12 L16 6 V17 H3Z" fill="#fff" stroke="#aaa" stroke-width="0.8"/>
 <rect x="0" y="1" width="10" height="3" fill="#d01010"/>
 <path d="M6 15 Q9 6 10 8 Q11 11 7 13 Q5 14 14 12" fill="none" stroke="#d01010" stroke-width="1.3"/>
</svg>
<div class="a nw" style="left:179px;top:56px;font-size:12.5px;color:#111"><i class="c">主</i><i class="c">体</i><i class="c">工</i><i class="c">艺</i><i class="c">流</i><i class="c">程</i><i class="c">与</i><i class="c">流</i><i class="c">程</i><i class="c">组</i>20180108.pdf - Adobe Acrobat Pro</div>
<!-- window buttons -->
<div class="a" style="left:655px;top:49px;width:28px;height:19px;border:1px solid #6a7a8a;border-top:none;border-radius:0 0 0 5px;background:linear-gradient(#e4eef6,#b8cedc)"></div>
<div class="a" style="left:663px;top:60px;width:12px;height:3px;background:#fff;border:1px solid #445"></div>
<div class="a" style="left:683px;top:49px;width:27px;height:19px;border:1px solid #6a7a8a;border-top:none;border-left:none;background:linear-gradient(#e4eef6,#b8cedc)"></div>
<div class="a" style="left:691px;top:53px;width:11px;height:9px;border:2px solid #445;background:#fff"></div>
<div class="a" style="left:710px;top:49px;width:47px;height:19px;border:1px solid #6a3030;border-top:none;border-radius:0 0 5px 0;background:linear-gradient(#e8a090,#c84030 50%,#b83020)"></div>
<div class="a nw" style="left:727px;top:47px;font-size:17px;font-weight:bold;color:#fff;text-shadow:0 0 2px #622">x</div>

<div class="a" style="left:756px;top:77px;width:8px;height:949px;background:linear-gradient(90deg,#4a5a60 0,#a8c0c8 20%,#90aab0 70%,#e4f0f0 90%,#3a4a50 100%)"></div>
<!-- inner frame -->
<div class="a" style="left:157px;top:77px;width:600px;height:945px;background:#d8d8d8;border:1px solid #7a8a98"></div>
<!-- menubar -->
<div class="a" style="left:158px;top:78px;width:598px;height:20px;background:linear-gradient(#f2f2f2,#e2e2e2);border-bottom:1px solid #b8b8b8"></div>
<div class="a nw" style="left:165px;top:80px;font-size:12px;color:#111;word-spacing:0">
<span class="a" style="left:0"><i class="c">文</i><i class="c">件</i>(F)</span><span class="a" style="left:52px"><i class="c">编</i><i class="c">辑</i>(E)</span><span class="a" style="left:105px"><i class="c">视</i><i class="c">图</i>(V)</span><span class="a" style="left:159px"><i class="c">文</i><i class="c">档</i>(D)</span><span class="a" style="left:213px"><i class="c">注</i><i class="c">释</i>(C)</span><span class="a" style="left:267px"><i class="c">表</i><i class="c">单</i>(R)</span><span class="a" style="left:321px"><i class="c">工</i><i class="c">具</i>(T)</span><span class="a" style="left:374px"><i class="c">高</i><i class="c">级</i>(A)</span><span class="a" style="left:428px"><i class="c">窗</i><i class="c">口</i>(W)</span><span class="a" style="left:487px"><i class="c">帮</i><i class="c">助</i>(H)</span></div>
<div class="a nw" style="left:741px;top:79px;font-size:13px;font-weight:bold;color:#000">×</div>
<!-- toolbars -->
<div class="a" style="left:158px;top:98px;width:598px;height:38px;background:linear-gradient(#f4f4f4,#e4e4e4 50%,#d4d4d4);border-bottom:1px solid #a8a8a8"></div>
<div class="a" style="left:158px;top:136px;width:598px;height:37px;background:linear-gradient(#f4f4f4,#e4e4e4 50%,#d4d4d4);border-bottom:1px solid #a8a8a8"></div>
<div class="a" style="left:158px;top:173px;width:598px;height:38px;background:linear-gradient(#f4f4f4,#e4e4e4 50%,#d4d4d4);border-bottom:1px solid #888"></div>
<svg class="a" style="left:0;top:0" width="770" height="220" viewBox="0 0 770 220">
 <!-- grips -->
 <path d="M162 106 v22 M165 106 v22 M162 144 v22 M165 144 v22 M162 181 v22 M165 181 v22 M352 144 v22 M355 144 v22 M483 144 v22 M486 144 v22 M242 181 v22 M245 181 v22" stroke="#b0b0b0" stroke-width="1.2" stroke-dasharray="1.5 1.5"/>
 <!-- toolbar1 -->
 <g>
  <path d="M181 105 H191 L195 109 V124 H181Z" fill="#fafafa" stroke="#9a9a9a" stroke-width="0.8"/>
  <path d="M178 108 h8 v3 h-8z" fill="#a8a8a8"/>
  <path d="M184 114 l2 4 l4 -1 l-1 4 l3 3 l-4 1 l0 4 l-4 -2 l-3 3 l-1 -4 l-4 -1 l3 -3 l-2 -4 l4 0z" fill="#f0a020" stroke="#c07010" stroke-width="0.6"/>
  <text x="201" y="121" font-size="12" fill="#111" font-family="Liberation Sans">创建</text>
  <path d="M230 115 h6 l-3 3z" fill="#111"/>
  <path d="M256 104 H266 L270 108 V123 H256Z" fill="#fafafa" stroke="#9a9a9a" stroke-width="0.8"/>
  <path d="M252 107 H262 L266 111 V126 H252Z" fill="#f4f4f4" stroke="#9a9a9a" stroke-width="0.8"/>
  <path d="M254 117 h5 v-5 h5 v5 h5 v5 h-5 v5 h-5 v-5 h-5z" fill="#40c030" stroke="#208010" stroke-width="0.7"/>
  <text x="278" y="121" font-size="12" fill="#111" font-family="Liberation Sans">合并</text>
  <path d="M306 115 h6 l-3 3z" fill="#111"/>
  <path d="M334 106 H344 L348 110 V124 H334Z" fill="#fafafa" stroke="#9a9a9a" stroke-width="0.8"/>
  <circle cx="330" cy="114" r="3" fill="#f0b070"/><path d="M325 123 q0 -6 5 -6 q5 0 5 6z" fill="#d03060"/>
  <circle cx="338" cy="117" r="3" fill="#f0b070"/><path d="M333 126 q0 -6 5 -6 q5 0 5 6z" fill="#3070d0"/>
  <path d="M353 115 h6 l-3 3z" fill="#111"/>
  <path d="M377 113 v-3 a6 6 0 0 1 12 0 v3" fill="none" stroke="#a08030" stroke-width="2"/>
  <rect x="374" y="113" width="18" height="13" rx="2" fill="#e0b030" stroke="#a07010" stroke-width="0.8"/>
  <rect x="382" y="117" width="2" height="5" fill="#604010"/>
  <path d="M398 115 h6 l-3 3z" fill="#111"/>
  <path d="M419 127 L437 107 L440 110 L422 130 L417 131Z" fill="#a8c4e0" stroke="#5078a8" stroke-width="0.8"/>
  <text x="445" y="121" font-size="12" fill="#111" font-family="Liberation Sans">签名</text>
  <path d="M474 115 h6 l-3 3z" fill="#111"/>
  <rect x="497.5" y="106.5" width="15" height="19" fill="#f0e8f8" stroke="#9060b8" stroke-width="1"/>
  <path d="M500 111 h10 M500 115 h10 M500 119 h10" stroke="#a040c0" stroke-width="2"/>
  <text x="520" y="121" font-size="12" fill="#111" font-family="Liberation Sans">表单</text>
  <path d="M549 115 h6 l-3 3z" fill="#111"/>
  <rect x="572" y="109" width="17" height="17" fill="#3a70b0" stroke="#202830" stroke-width="1"/>
  <path d="M574 110 v15 M587 110 v15" stroke="#fff" stroke-width="1.3" stroke-dasharray="1.5 1.5"/>
  <path d="M587 103 l2 4 l4 -1 l-2 4 l3 3 l-4 0 l-1 4 l-3 -3 l-3 2 l0 -4 l-3 -2 l4 -2z" fill="#f8e020"/>
  <text x="597" y="121" font-size="12" fill="#111" font-family="Liberation Sans">多媒体</text>
  <path d="M637 115 h6 l-3 3z" fill="#111"/>
  <path d="M660 117 q0 -6 8 -6 h4 q7 0 7 6 q0 6 -7 6 h-5 l-5 4 v-4 q-2 -1 -2 -6z" fill="#f8d030" stroke="#c09010" stroke-width="0.7"/>
  <path d="M668 110 q2 -5 8 -4 q6 0 5 5 q-1 4 -4 5" fill="#f0a8a0" stroke="#d06050" stroke-width="0.8"/>
  <text x="685" y="121" font-size="12" fill="#111" font-family="Liberation Sans">注释</text>
  <path d="M714 115 h6 l-3 3z" fill="#111"/>
 </g>
 <!-- toolbar2 -->
 <g>
  <path d="M172 148 h8 l2 2 h14 v14 h-24z" fill="#e8b830" stroke="#b08010" stroke-width="0.8"/>
  <path d="M172 164 l3 -10 h22 l-3 10z" fill="#f8d860" stroke="#c09020" stroke-width="0.8"/>
  <rect x="213" y="145" width="14" height="6" fill="#f4f4f4" stroke="#777" stroke-width="0.8"/>
  <rect x="208" y="150" width="24" height="10" rx="2" fill="#9a9a9a" stroke="#555" stroke-width="0.8"/>
  <rect x="213" y="157" width="14" height="8" fill="#fafafa" stroke="#777" stroke-width="0.8"/>
  <rect x="245.5" y="145.5" width="20" height="20" rx="2" fill="#d8d8d8" stroke="#b0b0b0"/>
  <rect x="250" y="147" width="11" height="6" fill="#eee"/><rect x="250" y="157" width="11" height="8" fill="#c8c8c8"/>
  <rect x="280.5" y="147.5" width="24" height="16" fill="#f4f8fc" stroke="#5a88b8" stroke-width="1"/>
  <path d="M284 153 h10 M284 156 h14 M284 159 h8" stroke="#9ab" stroke-width="1"/><rect x="297" y="149" width="5" height="4" fill="#4a78b8"/>
  <circle cx="331" cy="153" r="10" fill="#4a8ad8"/><path d="M324 150 q5 -4 10 0 q-2 5 -6 3" fill="#8ac8f8"/>
  <path d="M316 160 l6 -7 l6 7 h-3 v6 h-6 v-6z" fill="#40b830" stroke="#208010" stroke-width="0.8"/>
  <path d="M372 145 l10 10 h-6 v8 h-8 v-8 h-6z" fill="#4a8ad8" stroke="#2a5aa0" stroke-width="0.8"/>
  <path d="M402 165 l10 -10 h-6 v-8 h-8 v8 h-6z" fill="#4a8ad8" stroke="#2a5aa0" stroke-width="0.8"/>
  <rect x="421.5" y="143.5" width="25" height="23" fill="#fafafa" stroke="#e0e0e0"/>
  <text x="424" y="158" font-size="12" fill="#111" font-family="Liberation Sans">29</text>
  <text x="452" y="158" font-size="12" fill="#111" font-family="Liberation Sans">/ 45</text>
  <rect x="490.5" y="139.5" width="31" height="30" rx="2" fill="#e4e4e4" stroke="#c8c8c8"/>
  <path d="M498 147 h6 M501 147 v14 M498 161 h6" stroke="#111" stroke-width="1.5"/>
  <path d="M506 146 v14 l3 -3 l3 5 l2 -1 l-3 -5 h4z" fill="#111"/>
  <path d="M533 162 q-4 -6 -2 -9 q2 -1 4 2 v-8 q2 -2 3 0 v6 v-8 q2 -2 3 0 v8 v-7 q2 -2 3 0 v8 v-5 q2 -2 3 0 v8 q0 6 -5 8 h-6z" fill="#fafafa" stroke="#333" stroke-width="0.9"/>
  <circle cx="576" cy="152" r="6" fill="#c8dcf0" stroke="#5a7a9a" stroke-width="1.5"/>
  <path d="M580 156 l7 7" stroke="#5a6a7a" stroke-width="3"/>
  <path d="M572 146 h8 v2 M572 146 v2" stroke="#333" stroke-width="0.8" fill="none" stroke-dasharray="1 1"/>
  <path d="M600 144 v22" stroke="#c0c0c0"/>
  <circle cx="617" cy="154" r="7" fill="#c0d8f0" stroke="#6a98c8" stroke-width="1"/><path d="M613 154 h8" stroke="#2a5a98" stroke-width="2"/>
  <circle cx="642" cy="154" r="7" fill="#c0d8f0" stroke="#6a98c8" stroke-width="1"/><path d="M638 154 h8 M642 150 v8" stroke="#2a5a98" stroke-width="2"/>
  <rect x="659.5" y="143.5" width="44" height="23" fill="#fafafa" stroke="#e0e0e0"/>
  <text x="662" y="158" font-size="12" fill="#111" font-family="Liberation Sans">125%</text>
  <path d="M707 154 h6 l-3 3z" fill="#111"/>
 </g>
 <!-- toolbar3 -->
 <g>
  <rect x="177.5" y="182.5" width="14" height="8" fill="#e8f0f8" stroke="#5a88b8" stroke-width="1"/>
  <rect x="177.5" y="192.5" width="14" height="9" fill="#f0f4f8" stroke="#5a88b8" stroke-width="1"/>
  <path d="M179 197 h11 M179 197 l2 -2 m-2 2 l2 2 M190 197 l-2 -2 m2 2 l-2 2" stroke="#3a6aa8" stroke-width="1"/>
  <rect x="212.5" y="182.5" width="16" height="19" fill="#f0f4f8" stroke="#5a88b8" stroke-width="1"/>
  <path d="M220 184 v5 m-2 -3 l2 -2 l2 2 M220 200 v-5 m-2 3 l2 2 l2 -2 M214 192 h5 m-3 -2 l-2 2 l2 2 M227 192 h-5 m3 -2 l2 2 l-2 2" stroke="#3a6aa8" stroke-width="1" fill="none"/>
  <rect x="250.5" y="182.5" width="115" height="21" fill="#f4f4f4" stroke="#e4e4e4"/>
  <text x="253" y="198" font-size="12" fill="#555" font-family="Liberation Sans">查找</text>
  <path d="M368 192 h6 l-3 3z" fill="#111"/>
 </g>
</svg>

<!-- content -->
<div class="a" style="left:158px;top:212px;width:41px;height:809px;background:#333"></div>
<div class="a" style="left:199px;top:212px;width:542px;height:794px;background:#fff;border-left:1px solid #111;overflow:hidden">
 <div class="a" style="left:-5px;top:27px;width:550px;height:3px;background:#000"></div>
<div class="a" style="left:-5px;top:121px;width:550px;height:3px;background:#000"></div>
<div class="a" style="left:-5px;top:307px;width:550px;height:3px;background:#000"></div>
<div class="a" style="left:-5px;top:400px;width:550px;height:3px;background:#000"></div>
<div class="a" style="left:-5px;top:494px;width:550px;height:3px;background:#000"></div>
<div class="a" style="left:-5px;top:635px;width:550px;height:3px;background:#000"></div>
<div class="a" style="left:-5px;top:775px;width:550px;height:3px;background:#000"></div>
<div class="a" style="left:61px;top:0px;width:3px;height:777px;background:#000"></div>
<div class="a" style="left:384px;top:0px;width:3px;height:777px;background:#000"></div>
<div class="a" style="left:456px;top:0px;width:3px;height:777px;background:#000"></div>
<div class="a nw" style="left:3px;top:43px;font-family:'Liberation Serif',serif;font-size:19px;line-height:21px;color:#111;"><i class="c">或</i><i class="c">加</i></div>
<div class="a nw" style="left:3px;top:126px;font-family:'Liberation Serif',serif;font-size:19px;line-height:21px;color:#111;"><i class="c">上</i><i class="c">，</i></div>
<div class="a nw" style="left:3px;top:171px;font-family:'Liberation Serif',serif;font-size:19px;line-height:21px;color:#111;"><i class="c">倒</i><i class="c">边</i></div>
<div class="a nw" style="left:3px;top:218px;font-family:'Liberation Serif',serif;font-size:19px;line-height:21px;color:#111;"><i class="c">流</i></div>
<div class="a nw" style="left:3px;top:265px;font-family:'Liberation Serif',serif;font-size:19px;line-height:21px;color:#111;"><i class="c">角</i>→</div>
<div class="a nw" style="left:3px;top:311px;font-family:'Liberation Serif',serif;font-size:19px;line-height:21px;color:#111;"><i class="c">指</i><i class="c">凹</i></div>
<div class="a nw" style="left:3px;top:358px;font-family:'Liberation Serif',serif;font-size:19px;line-height:21px;color:#111;"><i class="c">倒</i><i class="c">边</i></div>
<div class="a nw" style="left:3px;top:406px;font-family:'Liberation Serif',serif;font-size:19px;line-height:21px;color:#111;"><i class="c">指</i><i class="c">示</i><i class="c">需</i></div>
<div class="a nw" style="left:3px;top:452px;font-family:'Liberation Serif',serif;font-size:19px;line-height:21px;color:#111;"><i class="c">角</i>→</div>
<div class="a nw" style="left:3px;top:545px;font-family:'Liberation Serif',serif;font-size:19px;line-height:21px;color:#111;">→<i class="c">开</i><i class="c">窗</i></div>
<div class="a nw" style="left:3px;top:568px;font-family:'Liberation Serif',serif;font-size:19px;line-height:21px;color:#111;"><i class="c">序</i></div>
<div class="a nw" style="left:3px;top:592px;font-family:'Liberation Serif',serif;font-size:19px;line-height:21px;color:#111;">/<i class="c">金</i><i class="c">指</i></div>
<div class="a nw" style="left:3px;top:639px;font-family:'Liberation Serif',serif;font-size:19px;line-height:21px;color:#111;">2[<i class="c">外</i></div>
<div class="a nw" style="left:3px;top:662px;font-family:'Liberation Serif',serif;font-size:19px;line-height:21px;color:#111;"><i class="c">铜</i><i class="c">镍</i><i class="c">金</i></div>
<div class="a nw" style="left:3px;top:685px;font-family:'Liberation Serif',serif;font-size:19px;line-height:21px;color:#111;">→<i class="c">贴</i></div>
<div class="a nw" style="left:3px;top:709px;font-family:'Liberation Serif',serif;font-size:19px;line-height:21px;color:#111;">→<i class="c">电</i></div>
<div class="a nw" style="left:3px;top:732px;font-family:'Liberation Serif',serif;font-size:19px;line-height:21px;color:#111;">→<i class="c">镀</i><i class="c">金</i></div>
<div class="a nw" style="left:66px;top:43px;font-family:'Liberation Serif',serif;font-size:19px;line-height:21px;color:#111;">1<i class="c">、</i><i class="c">字</i><i class="c">符</i>1(<i class="c">丝</i><i class="c">印</i>)<i class="c">用</i><i class="c">于</i><i class="c">印</i><i class="c">白</i><i class="c">油</i><i class="c">块</i><i class="c">，</i><i class="c">需</i><i class="c">在</i></div>
<div class="a nw" style="left:66px;top:66px;font-family:'Liberation Serif',serif;font-size:19px;line-height:21px;color:#111;">“<i class="c">字</i><i class="c">符</i>1”<i class="c">参</i><i class="c">数</i>“<i class="c">字</i><i class="c">符</i><i class="c">白</i><i class="c">油</i><i class="c">块</i>”<i class="c">选</i><i class="c">择</i>“</div>
<div class="a nw" style="left:66px;top:89px;font-family:'Liberation Serif',serif;font-size:19px;line-height:21px;color:#111;">Y”</div>
<div class="a nw" style="left:66px;top:557px;font-family:'Liberation Serif',serif;font-size:19px;line-height:21px;color:#111;">1<i class="c">、</i><i class="c">流</i><i class="c">程</i><i class="c">组</i><i class="c">件</i>1<i class="c">、</i>2<i class="c">需</i><i class="c">同</i><i class="c">时</i><i class="c">使</i><i class="c">用</i></div>
<div class="a nw" style="left:66px;top:685px;font-family:'Liberation Serif',serif;font-size:19px;line-height:21px;color:#111;"><i class="c">外</i><i class="c">层</i><i class="c">干</i><i class="c">膜</i>3<i class="c">为</i><i class="c">盖</i><i class="c">住</i><i class="c">小</i><i class="c">引</i><i class="c">线</i>&amp;<i class="c">连</i><i class="c">接</i><i class="c">盘</i>&amp;<i class="c">主</i><i class="c">引</i></div>
<div class="a nw" style="left:66px;top:709px;font-family:'Liberation Serif',serif;font-size:19px;line-height:21px;color:#111;"><i class="c">线</i><i class="c">开</i><i class="c">窗</i></div>
<div class="a nw" style="left:391px;top:65px;width:60px;text-align:center;font-family:'Liberation Serif',serif;font-size:19.5px;line-height:22px;color:#111"><span style="display:inline-block;transform:scaleX(0.76)">TRUE</span></div>
<div class="a nw" style="left:470px;top:65px;width:60px;text-align:center;font-family:'Liberation Serif',serif;font-size:19.5px;line-height:22px;color:#111"><span style="display:inline-block;transform:scaleX(0.76)">TRUE</span></div>
<div class="a nw" style="left:391px;top:205px;width:60px;text-align:center;font-family:'Liberation Serif',serif;font-size:19.5px;line-height:22px;color:#111"><span style="display:inline-block;transform:scaleX(0.76)">TRUE</span></div>
<div class="a nw" style="left:470px;top:205px;width:60px;text-align:center;font-family:'Liberation Serif',serif;font-size:19.5px;line-height:22px;color:#111"><span style="display:inline-block;transform:scaleX(0.76)">TRUE</span></div>
<div class="a nw" style="left:391px;top:345px;width:60px;text-align:center;font-family:'Liberation Serif',serif;font-size:19.5px;line-height:22px;color:#111"><span style="display:inline-block;transform:scaleX(0.76)">TRUE</span></div>
<div class="a nw" style="left:470px;top:345px;width:60px;text-align:center;font-family:'Liberation Serif',serif;font-size:19.5px;line-height:22px;color:#111"><span style="display:inline-block;transform:scaleX(0.76)">TRUE</span></div>
<div class="a nw" style="left:391px;top:439px;width:60px;text-align:center;font-family:'Liberation Serif',serif;font-size:19.5px;line-height:22px;color:#111"><span style="display:inline-block;transform:scaleX(0.76)">TRUE</span></div>
<div class="a nw" style="left:470px;top:439px;width:60px;text-align:center;font-family:'Liberation Serif',serif;font-size:19.5px;line-height:22px;color:#111"><span style="display:inline-block;transform:scaleX(0.76)">TRUE</span></div>
<div class="a nw" style="left:391px;top:556px;width:60px;text-align:center;font-family:'Liberation Serif',serif;font-size:19.5px;line-height:22px;color:#111"><span style="display:inline-block;transform:scaleX(0.76)">TRUE</span></div>
<div class="a nw" style="left:470px;top:556px;width:60px;text-align:center;font-family:'Liberation Serif',serif;font-size:19.5px;line-height:22px;color:#111"><span style="display:inline-block;transform:scaleX(0.76)">TRUE</span></div>
<div class="a" style="left:60px;top:669px;width:372px;height:80px;border:3px solid #e020e8;box-shadow:2px 2px 3px rgba(0,0,0,0.35), inset 2px 2px 3px rgba(0,0,0,0.25)"></div>
<svg class="a" style="left:300px;top:703px" width="70" height="70" viewBox="0 0 70 70"><path d="M24 61 L48 26" stroke="#e82030" stroke-width="6" stroke-linecap="round"/><path d="M58 10 L38 24 L52 34Z" fill="#e82030"/></svg>
</div>
<div class="a" style="left:199px;top:212px;width:542px;height:4px;background:linear-gradient(#999,#fff0)"></div>
<!-- vertical scrollbar -->
<div class="a" style="left:741px;top:212px;width:15px;height:794px;background:#ececec;border-left:1px solid #d8d8d8"></div>
<div class="a" style="left:742px;top:215px;width:14px;height:4px;background:#fff;border:1px solid #ccc"></div>
<svg class="a" style="left:741px;top:222px" width="15" height="10"><path d="M4 7 L7.5 3 L11 7Z" fill="#333"/></svg>
<div class="a" style="left:742px;top:706px;width:14px;height:15px;background:linear-gradient(90deg,#f8f8f8,#dcdcdc);border:1px solid #9a9a9a;border-radius:2px"></div>
<svg class="a" style="left:741px;top:990px" width="15" height="10"><path d="M4 3 L7.5 7 L11 3Z" fill="#333"/></svg>
<!-- status bar -->
<div class="a" style="left:199px;top:1006px;width:557px;height:15px;background:#e8e8e8;border-top:1px solid #d0d0d0"></div>
<div class="a nw" style="left:219px;top:1007px;font-size:11.5px;color:#222;letter-spacing:-0.3px">29.700 x 20.996 <i class="c">厘</i><i class="c">米</i></div>
<div class="a" style="left:343px;top:1007px;width:413px;height:14px;background:#f0f0f0"></div>
<svg class="a" style="left:346px;top:1008px" width="12" height="12"><path d="M8 2 L4 6 L8 10Z" fill="#333"/></svg>
<div class="a" style="left:577px;top:1007px;width:119px;height:13px;background:linear-gradient(#f8f8f8,#d8d8d8);border:1px solid #9a9a9a;border-radius:2px"></div>
<div class="a" style="left:632px;top:1010px;width:7px;height:6px;border-left:1px solid #777;border-right:1px solid #777"><div class="a" style="left:2px;top:0;width:1px;height:6px;background:#777"></div></div>
<svg class="a" style="left:726px;top:1008px" width="12" height="12"><path d="M4 2 L8 6 L4 10Z" fill="#333"/></svg>
<!-- sidebar icons -->
<svg class="a" style="left:158px;top:212px" width="41" height="809" viewBox="0 0 41 809">
 <path d="M12 16 H24 L28 20 V35 H12Z" fill="#c8c8c8" stroke="#888" stroke-width="0.8"/>
 <path d="M10 19 V38 H25" fill="none" stroke="#aaa" stroke-width="1.5"/>
 <path d="M15 23 h10 M15 26 h10 M15 29 h10" stroke="#888" stroke-width="0.8"/>
 <path d="M12 58 H24 L28 62 V78 H12Z" fill="#c0c8d4" stroke="#8a9aaa" stroke-width="0.8"/>
 <path d="M10 61 V81 H25" fill="none" stroke="#a0aab8" stroke-width="1.5"/>
 <path d="M16 60 v10 l2 -2 l2 2 v-10" fill="#4a7ab0"/>
 <path d="M8 118 L28 102 M9 110 h16 M9 114 h16" stroke="#a8b8c8" stroke-width="2"/>
 <path d="M9 105 h20 v14 h-20z" fill="none" stroke="#8898a8" stroke-width="1.3"/>
<g transform="translate(0,6)"> <path d="M8 733 q0 -6 8 -6 h8 q6 0 6 5 q0 5 -6 5 h-6 l-4 4 v-4 q-6 0 -6 -4z" fill="#c8a830"/>
 <path d="M14 738 q0 -6 8 -6 h6 q6 0 6 5 q0 5 -6 5 h-2 l-3 4 v-4 h-3 q-6 0 -6 -4z" fill="#d8b838" stroke="#8a7020" stroke-width="0.6"/>
 <path d="M19 736 h10 M19 739 h10" stroke="#7a6018" stroke-width="0.8"/>
 </g><g transform="translate(0,3)"><path d="M12 797 L27 780 Q31 776 27 773 Q23 770 19 775 L9 787 Q6 791 9 793 Q12 795 15 792 L24 782" fill="none" stroke="#a8a8a8" stroke-width="2.2"/></g>
</svg>

<!-- ===== right toolbar ===== -->
<div class="a" style="left:1757px;top:78px;width:163px;height:165px;background:#0c0e0e;border-left:2px solid #3f8272;border-top:2px solid #3f8272"></div>
<div class="a" style="left:1757px;top:243px;width:163px;height:244px;background:#151515;border-left:2px solid #3f8272;border-top:1px solid #3f8272"></div>
<div class="a" style="left:1917px;top:78px;width:3px;height:409px;background:#4fae98"></div>
<div class="a" style="left:1759px;top:81px;width:38px;height:37px;background:#9ad4d4;border-top:3px solid #c8f2f0;border-left:3px solid #c8f2f0;border-bottom:3px solid #3f8272;border-right:3px solid #3f8272"><div class="a" style="left:2px;top:2px;width:28px;height:27px;border:1px solid #000"></div></div>
<div class="a" style="left:1799px;top:81px;width:38px;height:37px;background:#9ad4d4;border-top:3px solid #c8f2f0;border-left:3px solid #c8f2f0;border-bottom:3px solid #3f8272;border-right:3px solid #3f8272"><div class="a" style="left:2px;top:2px;width:28px;height:27px;border:1px solid #000"></div></div>
<div class="a" style="left:1839px;top:81px;width:38px;height:37px;background:#9ad4d4;border-top:3px solid #c8f2f0;border-left:3px solid #c8f2f0;border-bottom:3px solid #3f8272;border-right:3px solid #3f8272"><div class="a" style="left:2px;top:2px;width:28px;height:27px;border:1px solid #000"></div></div>
<div class="a" style="left:1879px;top:81px;width:38px;height:37px;background:#9ad4d4;border-top:3px solid #c8f2f0;border-left:3px solid #c8f2f0;border-bottom:3px solid #3f8272;border-right:3px solid #3f8272"><div class="a" style="left:2px;top:2px;width:28px;height:27px;border:1px solid #000"></div></div>
<div class="a" style="left:1759px;top:121px;width:38px;height:37px;background:#9ad4d4;border-top:3px solid #c8f2f0;border-left:3px solid #c8f2f0;border-bottom:3px solid #3f8272;border-right:3px solid #3f8272"><div class="a" style="left:2px;top:2px;width:28px;height:27px;border:1px solid #000"></div></div>
<div class="a" style="left:1799px;top:121px;width:38px;height:37px;background:#9ad4d4;border-top:3px solid #c8f2f0;border-left:3px solid #c8f2f0;border-bottom:3px solid #3f8272;border-right:3px solid #3f8272"><div class="a" style="left:2px;top:2px;width:28px;height:27px;border:1px solid #000"></div></div>
<div class="a" style="left:1839px;top:121px;width:38px;height:37px;background:#9ad4d4;border-top:3px solid #c8f2f0;border-left:3px solid #c8f2f0;border-bottom:3px solid #3f8272;border-right:3px solid #3f8272"><div class="a" style="left:2px;top:2px;width:28px;height:27px;border:1px solid #000"></div></div>
<div class="a" style="left:1879px;top:121px;width:38px;height:37px;background:#9ad4d4;border-top:3px solid #c8f2f0;border-left:3px solid #c8f2f0;border-bottom:3px solid #3f8272;border-right:3px solid #3f8272"><div class="a" style="left:2px;top:2px;width:28px;height:27px;border:1px solid #000"></div></div>
<div class="a" style="left:1759px;top:161px;width:38px;height:37px;background:#9ad4d4;border-top:3px solid #c8f2f0;border-left:3px solid #c8f2f0;border-bottom:3px solid #3f8272;border-right:3px solid #3f8272"><div class="a" style="left:2px;top:2px;width:28px;height:27px;border:1px solid #000"></div></div>
<div class="a" style="left:1799px;top:161px;width:38px;height:37px;background:#9ad4d4;border-top:3px solid #c8f2f0;border-left:3px solid #c8f2f0;border-bottom:3px solid #3f8272;border-right:3px solid #3f8272"><div class="a" style="left:2px;top:2px;width:28px;height:27px;border:1px solid #000"></div></div>
<div class="a" style="left:1839px;top:161px;width:38px;height:37px;background:#9ad4d4;border-top:3px solid #c8f2f0;border-left:3px solid #c8f2f0;border-bottom:3px solid #3f8272;border-right:3px solid #3f8272"><div class="a" style="left:2px;top:2px;width:28px;height:27px;border:1px solid #000"></div></div>
<div class="a" style="left:1879px;top:161px;width:38px;height:37px;background:#9ad4d4;border-top:3px solid #c8f2f0;border-left:3px solid #c8f2f0;border-bottom:3px solid #3f8272;border-right:3px solid #3f8272"><div class="a" style="left:2px;top:2px;width:28px;height:27px;border:1px solid #000"></div></div>
<div class="a" style="left:1759px;top:201px;width:38px;height:37px;background:#9ad4d4;border-top:3px solid #c8f2f0;border-left:3px solid #c8f2f0;border-bottom:3px solid #3f8272;border-right:3px solid #3f8272"><div class="a" style="left:2px;top:2px;width:28px;height:27px;border:1px solid #000"></div></div>
<div class="a" style="left:1799px;top:201px;width:38px;height:37px;background:#9ad4d4;border-top:3px solid #c8f2f0;border-left:3px solid #c8f2f0;border-bottom:3px solid #3f8272;border-right:3px solid #3f8272"><div class="a" style="left:2px;top:2px;width:28px;height:27px;border:1px solid #000"></div></div>
<div class="a" style="left:1839px;top:201px;width:38px;height:37px;background:#9ad4d4;border-top:3px solid #e8a0a0;border-left:3px solid #e8a0a0;border-bottom:3px solid #7a1818;border-right:3px solid #7a1818"><div class="a" style="left:1px;top:1px;width:30px;height:29px;border:3px solid #b81818"></div></div>
<div class="a" style="left:1879px;top:201px;width:38px;height:37px;background:#9ad4d4;border-top:3px solid #e8a0a0;border-left:3px solid #e8a0a0;border-bottom:3px solid #7a1818;border-right:3px solid #7a1818"><div class="a" style="left:1px;top:1px;width:30px;height:29px;border:3px solid #b81818"></div></div>
<div class="a" style="left:1759px;top:245px;width:38px;height:37px;background:#ffffff;border-top:3px solid #f4f4f4;border-left:3px solid #f4f4f4;border-bottom:3px solid #8a8a8a;border-right:3px solid #8a8a8a"><div class="a" style="left:2px;top:2px;width:28px;height:27px;border:1px solid #000"></div></div>
<div class="a" style="left:1799px;top:245px;width:38px;height:37px;background:#ffffff;border-top:3px solid #f4f4f4;border-left:3px solid #f4f4f4;border-bottom:3px solid #8a8a8a;border-right:3px solid #8a8a8a"><div class="a" style="left:2px;top:2px;width:28px;height:27px;border:1px solid #000"></div></div>
<div class="a" style="left:1839px;top:245px;width:38px;height:37px;background:#ffffff;border-top:3px solid #f4f4f4;border-left:3px solid #f4f4f4;border-bottom:3px solid #8a8a8a;border-right:3px solid #8a8a8a"><div class="a" style="left:2px;top:2px;width:28px;height:27px;border:1px solid #000"></div></div>
<div class="a" style="left:1879px;top:245px;width:38px;height:37px;background:#ffffff;border-top:3px solid #f4f4f4;border-left:3px solid #f4f4f4;border-bottom:3px solid #8a8a8a;border-right:3px solid #8a8a8a"><div class="a" style="left:2px;top:2px;width:28px;height:27px;border:1px solid #000"></div></div>
<div class="a" style="left:1759px;top:285px;width:38px;height:37px;background:#d4d4d4;border-top:3px solid #f4f4f4;border-left:3px solid #f4f4f4;border-bottom:3px solid #7a7a7a;border-right:3px solid #7a7a7a"><div class="a" style="left:2px;top:2px;width:28px;height:27px;border:1px solid #000"></div></div>
<div class="a" style="left:1799px;top:285px;width:38px;height:37px;background:#d4d4d4;border-top:3px solid #f4f4f4;border-left:3px solid #f4f4f4;border-bottom:3px solid #7a7a7a;border-right:3px solid #7a7a7a"><div class="a" style="left:2px;top:2px;width:28px;height:27px;border:1px solid #000"></div></div>
<div class="a" style="left:1839px;top:285px;width:38px;height:37px;background:#d4d4d4;border-top:3px solid #f4f4f4;border-left:3px solid #f4f4f4;border-bottom:3px solid #7a7a7a;border-right:3px solid #7a7a7a"><div class="a" style="left:2px;top:2px;width:28px;height:27px;border:1px solid #000"></div></div>
<div class="a" style="left:1879px;top:285px;width:38px;height:37px;background:#d4d4d4;border-top:3px solid #f4f4f4;border-left:3px solid #f4f4f4;border-bottom:3px solid #7a7a7a;border-right:3px solid #7a7a7a"><div class="a" style="left:2px;top:2px;width:28px;height:27px;border:1px solid #000"></div></div>
<div class="a" style="left:1759px;top:325px;width:38px;height:37px;background:#d4d4d4;border-top:3px solid #f4f4f4;border-left:3px solid #f4f4f4;border-bottom:3px solid #7a7a7a;border-right:3px solid #7a7a7a"><div class="a" style="left:2px;top:2px;width:28px;height:27px;border:1px solid #000"></div></div>
<div class="a" style="left:1799px;top:325px;width:38px;height:37px;background:#d4d4d4;border-top:3px solid #f4f4f4;border-left:3px solid #f4f4f4;border-bottom:3px solid #7a7a7a;border-right:3px solid #7a7a7a"><div class="a" style="left:2px;top:2px;width:28px;height:27px;border:1px solid #000"></div></div>
<div class="a" style="left:1839px;top:325px;width:38px;height:37px;background:#d4d4d4;border-top:3px solid #f4f4f4;border-left:3px solid #f4f4f4;border-bottom:3px solid #7a7a7a;border-right:3px solid #7a7a7a"><div class="a" style="left:2px;top:2px;width:28px;height:27px;border:1px solid #000"></div></div>
<div class="a" style="left:1879px;top:325px;width:38px;height:37px;background:#d4d4d4;border-top:3px solid #f4f4f4;border-left:3px solid #f4f4f4;border-bottom:3px solid #7a7a7a;border-right:3px solid #7a7a7a"><div class="a" style="left:2px;top:2px;width:28px;height:27px;border:1px solid #000"></div></div>
<div class="a" style="left:1759px;top:365px;width:38px;height:37px;background:#d4d4d4;border-top:3px solid #f4f4f4;border-left:3px solid #f4f4f4;border-bottom:3px solid #7a7a7a;border-right:3px solid #7a7a7a"><div class="a" style="left:2px;top:2px;width:28px;height:27px;border:1px solid #000"></div></div>
<div class="a" style="left:1799px;top:365px;width:38px;height:37px;background:#d4d4d4;border-top:3px solid #f4f4f4;border-left:3px solid #f4f4f4;border-bottom:3px solid #7a7a7a;border-right:3px solid #7a7a7a"><div class="a" style="left:2px;top:2px;width:28px;height:27px;border:1px solid #000"></div></div>
<div class="a" style="left:1839px;top:365px;width:38px;height:37px;background:#d4d4d4;border-top:3px solid #f4f4f4;border-left:3px solid #f4f4f4;border-bottom:3px solid #7a7a7a;border-right:3px solid #7a7a7a"><div class="a" style="left:2px;top:2px;width:28px;height:27px;border:1px solid #000"></div></div>
<div class="a" style="left:1879px;top:365px;width:38px;height:37px;background:#d4d4d4;border-top:3px solid #f4f4f4;border-left:3px solid #f4f4f4;border-bottom:3px solid #7a7a7a;border-right:3px solid #7a7a7a"><div class="a" style="left:2px;top:2px;width:28px;height:27px;border:1px solid #000"></div></div>
<div class="a" style="left:1759px;top:405px;width:38px;height:37px;background:#d4d4d4;border-top:3px solid #f4f4f4;border-left:3px solid #f4f4f4;border-bottom:3px solid #7a7a7a;border-right:3px solid #7a7a7a"><div class="a" style="left:2px;top:2px;width:28px;height:27px;border:1px solid #000"></div></div>
<div class="a" style="left:1799px;top:405px;width:38px;height:37px;background:#d4d4d4;border-top:3px solid #f4f4f4;border-left:3px solid #f4f4f4;border-bottom:3px solid #7a7a7a;border-right:3px solid #7a7a7a"><div class="a" style="left:2px;top:2px;width:28px;height:27px;border:1px solid #000"></div></div>
<div class="a" style="left:1839px;top:405px;width:38px;height:37px;background:#d4d4d4;border-top:3px solid #f4f4f4;border-left:3px solid #f4f4f4;border-bottom:3px solid #7a7a7a;border-right:3px solid #7a7a7a"><div class="a" style="left:2px;top:2px;width:28px;height:27px;border:1px solid #000"></div></div>
<div class="a" style="left:1879px;top:405px;width:38px;height:37px;background:#d4d4d4;border-top:3px solid #f4f4f4;border-left:3px solid #f4f4f4;border-bottom:3px solid #7a7a7a;border-right:3px solid #7a7a7a"><div class="a" style="left:2px;top:2px;width:28px;height:27px;border:1px solid #000"></div></div>
<div class="a" style="left:1759px;top:445px;width:38px;height:37px;background:#f8c464;border-top:3px solid #fde4a8;border-left:3px solid #fde4a8;border-bottom:3px solid #9a7a30;border-right:3px solid #9a7a30"><div class="a" style="left:2px;top:2px;width:28px;height:27px;border:1px solid #000"></div></div>
<div class="a" style="left:1799px;top:445px;width:38px;height:37px;background:#f8c464;border-top:3px solid #fde4a8;border-left:3px solid #fde4a8;border-bottom:3px solid #9a7a30;border-right:3px solid #9a7a30"><div class="a" style="left:2px;top:2px;width:28px;height:27px;border:1px solid #000"></div></div>
<div class="a" style="left:1839px;top:445px;width:38px;height:37px;background:#f8c464;border-top:3px solid #fde4a8;border-left:3px solid #fde4a8;border-bottom:3px solid #9a7a30;border-right:3px solid #9a7a30"><div class="a" style="left:2px;top:2px;width:28px;height:27px;border:1px solid #000"></div></div>
<div class="a" style="left:1879px;top:445px;width:38px;height:37px;background:#f8c464;border-top:3px solid #fde4a8;border-left:3px solid #fde4a8;border-bottom:3px solid #9a7a30;border-right:3px solid #9a7a30"><div class="a" style="left:2px;top:2px;width:28px;height:27px;border:1px solid #000"></div></div>
<svg class="a" style="left:0;top:0" width="1920" height="1026" viewBox="0 0 1920 1026">
<g transform="translate(1759,81)"><rect x="12.5" y="14.5" width="14" height="13" fill="none" stroke="#000" stroke-width="3"/><path d="M19.5 5 L26 11 L23 11 L23 19 L16 19 L16 11 L13 11Z" fill="#000"/></g>
<g transform="translate(1799,81)"><rect x="12.5" y="8.5" width="14" height="14" fill="none" stroke="#000" stroke-width="3"/><path d="M19.5 31 L26 25 L23 25 L23 18 L16 18 L16 25 L13 25Z" fill="#000"/></g>
<g transform="translate(1839,81)"><path d="M8 20 L19 9 L30 20 M12 18 V30 H26 V18 M19 30 V23 H24 V30 M14 23 h3 v3 h-3z M26 14 V7" fill="none" stroke="#000" stroke-width="2"/></g>
<g transform="translate(1879,81)"><rect x="9.5" y="8.5" width="20" height="21" fill="none" stroke="#000" stroke-width="3"/><path d="M20 9 V29 M10 24 H29" stroke="#000" stroke-width="1.5"/><text x="21" y="21" font-size="6" font-family="Liberation Sans">xy</text></g>
<g transform="translate(1759,121)"><rect x="15.5" y="10.5" width="13" height="16" fill="none" stroke="#000" stroke-width="3"/><path d="M6 18.5 L12 12 V15 H18 V22 H12 V25Z" fill="#000"/></g>
<g transform="translate(1799,121)"><rect x="9.5" y="10.5" width="13" height="16" fill="none" stroke="#000" stroke-width="3"/><path d="M32 18.5 L26 12 V15 H20 V22 H26 V25Z" fill="#000"/></g>
<g transform="translate(1839,121)"><rect x="17.5" y="11.5" width="12" height="14" fill="none" stroke="#000" stroke-width="3"/><path d="M13 26 V19 Q13 15 9 15" fill="none" stroke="#000" stroke-width="3"/><path d="M7 11 L7 19 L11 15Z" fill="#000"/></g>
<g transform="translate(1879,121)"><path d="M30 11 H13 V19 H28 V27 H10" fill="none" stroke="#000" stroke-width="3"/><path d="M30 11 l3 -3 M30 11 l3 3 M10 27 l-3 -3 M10 27 l-3 3" stroke="#000" stroke-width="1"/></g>
<g transform="translate(1759,161)"><rect x="12" y="12" width="14.5" height="14" fill="none" stroke="#000" stroke-width="2.2"/><path d="M13 4.5 H24 L18.5 10Z M13 33 H24 L18.5 27.5Z M4.5 13 V24 L9.5 18.5Z M33.5 13 V24 L28.5 18.5Z" fill="#000"/></g>
<g transform="translate(1799,161)"><rect x="15" y="15.5" width="8" height="8" fill="none" stroke="#000" stroke-width="2"/><path d="M13.5 12.5 H24 L18.75 7.5Z M13.5 26 H24 L18.75 31Z M12.5 14 V25 L7.5 19.5Z M25.5 14 V25 L30.5 19.5Z" fill="#000"/></g>
<g transform="translate(1839,161)"><text x="19" y="24" text-anchor="middle" font-size="14" font-weight="bold" font-family="Liberation Sans">1:2</text></g>
<g transform="translate(1879,161)"><rect x="8" y="8.5" width="22" height="21" fill="none" stroke="#000" stroke-width="2.8"/><text x="19" y="26" text-anchor="middle" font-size="13" font-weight="bold" font-family="Liberation Mono">?</text></g>
<g transform="translate(1759,201)"><rect x="7" y="8" width="19" height="3" fill="#000"/><circle cx="28.3" cy="9.5" r="2.6" fill="none" stroke="#000" stroke-width="2"/><path d="M7 16.5 L11 14.5 H30.5 V18.5 H11 Z" fill="none" stroke="#000" stroke-width="1.2"/><path d="M15 30 Q11 28 13 23 Q16 19 23 20 Q28 21 27 25 Q26 27 23 28 Q20 32 15 30Z" fill="none" stroke="#000" stroke-width="1.1"/><circle cx="17" cy="25" r="0.8" fill="#000"/><circle cx="21" cy="23" r="0.8" fill="#000"/></g>
<g transform="translate(1799,201)"><path d="M14 6 V32 M24 6 V32 M6 15 H33 M6 24 H33" stroke="#d0a0a8" stroke-width="1"/></g>
<g transform="translate(1839,201)"><path d="M5 5 V17.3 M5 17.3 H18.6 V32" fill="none" stroke="#e01010" stroke-width="1.1"/><circle cx="5.5" cy="17.3" r="2.7" fill="#f01010"/><path d="M15.6 8 V27 H7.5" fill="none" stroke="#1a1aee" stroke-width="1.2"/><circle cx="13.8" cy="8" r="2.4" fill="#1a1aee"/><circle cx="7.5" cy="27" r="2.6" fill="#1a1aee"/><rect x="20.3" y="6.2" width="11.4" height="25.5" fill="none" stroke="#000" stroke-width="1.2"/><circle cx="25.8" cy="11.8" r="3.1" fill="#f01010"/><circle cx="25.8" cy="19.8" r="2.2" fill="none" stroke="#000" stroke-width="1"/><circle cx="25.8" cy="27" r="2.2" fill="none" stroke="#000" stroke-width="1"/></g>
<g transform="translate(1879,201)"><path d="M8.7 5 V17.3 M16.3 8 V27.5 H10.4" fill="none" stroke="#000" stroke-width="1.2"/><path d="M9 16.5 H16 M12 14.5 v3 M14 14.5 v3" stroke="#e01010" stroke-width="1"/><circle cx="16.3" cy="8" r="2.5" fill="#000"/><circle cx="8.3" cy="17.3" r="2.7" fill="#000"/><circle cx="10.4" cy="27.5" r="2.6" fill="#000"/><rect x="20.6" y="6.2" width="11" height="25.5" fill="none" stroke="#000" stroke-width="1.2"/><circle cx="26" cy="11.8" r="3.1" fill="#f01010"/><circle cx="26" cy="19.8" r="2.2" fill="none" stroke="#000" stroke-width="1"/><circle cx="26" cy="27" r="2.2" fill="none" stroke="#000" stroke-width="1"/></g>
<g transform="translate(1759,245)"><circle cx="14" cy="22" r="8" fill="#000"/><path d="M18 18 L29 8 M29 8 l-5 1 m5 -1 l-1 5" stroke="#000" stroke-width="3" fill="none"/><rect x="20" y="22" width="8" height="6" fill="#fff" stroke="#000" stroke-width="1"/></g>
<g transform="translate(1799,245)"><rect x="5" y="5" width="28" height="27" fill="#000"/><rect x="18.5" y="8.5" width="11" height="10" fill="none" stroke="#e81010" stroke-width="2.5"/><rect x="8" y="24" width="7" height="6" fill="none" stroke="#1a1aff" stroke-width="2"/><path d="M9 24 L18 9 M14 27 L29 19" stroke="#fff" stroke-width="1"/></g>
<g transform="translate(1839,245)"><rect x="8" y="16" width="23" height="6" fill="#000"/><path d="M10 16 v3 M12 16 v2 M14 16 v3 M16 16 v2 M18 16 v4 M20 16 v2 M22 16 v3 M24 16 v2 M26 16 v3 M28 16 v2" stroke="#fff" stroke-width="1"/></g>
<g transform="translate(1879,245)"><rect x="9.5" y="8.5" width="20" height="20" fill="none" stroke="#000" stroke-width="1" stroke-dasharray="2 2"/><path d="M16 12 H23 L27 16 V22 L23 26 H16 L12 22 V16Z" fill="#000"/></g>
<g transform="translate(1759,285)"><circle cx="25" cy="12" r="4.5" fill="#f01010"/><circle cx="21" cy="27" r="5" fill="#1a1aee"/><path d="M8 27 h13" stroke="#1a1aee" stroke-width="3"/></g>
<g transform="translate(1799,285)"><path d="M10 9 L29 28 M29 9 L10 28" stroke="#000" stroke-width="2.5"/><circle cx="19.5" cy="18.5" r="4.5" fill="#1a1aee"/></g>
<g transform="translate(1839,285)"><circle cx="27" cy="11" r="4.5" fill="#f01010"/><circle cx="11" cy="27" r="3.8" fill="none" stroke="#1a1aee" stroke-width="2"/><path d="M15 23 L22 16 M22 16 l-4 0.5 M22 16 l-0.5 4" stroke="#000" stroke-width="1.2" fill="none"/></g>
<g transform="translate(1879,285)"><circle cx="27" cy="11" r="4.5" fill="#f01010"/><circle cx="11" cy="27" r="5" fill="#1a1aee"/><path d="M15 23 L22 16 M22 16 l-4 0.5 M22 16 l-0.5 4" stroke="#000" stroke-width="1.2" fill="none"/></g>
<g transform="translate(1759,325)"><path d="M10 24 L26 10" stroke="#f01010" stroke-width="3"/><path d="M8 31 H30" stroke="#1a1aee" stroke-width="3"/><path d="M20 22 l4 4 m-4 -4 v3 m0 -3 h3" stroke="#000" stroke-width="1"/></g>
<g transform="translate(1799,325)"><path d="M9 29 L19 20" stroke="#1a1aee" stroke-width="3.5" stroke-linecap="round"/><path d="M19 20 L28 11" stroke="#f01010" stroke-width="3.5" stroke-linecap="round"/><path d="M21 27 L26 22 M26 22 h-3 M26 22 v3" stroke="#000" stroke-width="1" fill="none"/></g>
<g transform="translate(1839,325)"><path d="M16 10 A8.5 8.5 0 1 1 16 27" fill="none" stroke="#000" stroke-width="2"/><path d="M13 27 L18 23 L18 31Z" fill="#000"/></g>
<g transform="translate(1879,325)"><path d="M9 10 H16 V27 M10 18 H16" stroke="#1a1aee" stroke-width="2.5" fill="none"/><path d="M19 8 V30" stroke="#000" stroke-width="1"/><path d="M30 10 H23 V27 M23 18 H29" stroke="#f01010" stroke-width="2.5" fill="none"/></g>
<g transform="translate(1759,365)"><rect x="19" y="8" width="12" height="12" fill="#f01010"/><circle cx="25" cy="14" r="3.5" fill="#fff"/><path d="M19 20 v6" stroke="#000" stroke-width="2"/></g>
<g transform="translate(1799,365)"><path d="M8 18.5 H15 M23 18.5 H31" stroke="#f01010" stroke-width="3"/><path d="M15 18.5 H23" stroke="#1a1aee" stroke-width="3"/></g>
<g transform="translate(1839,365)"><path d="M8 6 V32 M30 6 V32" stroke="#000" stroke-width="1.3"/><path d="M9 19 H29 M9 19 l3 -2 m-3 2 l3 2 M29 19 l-3 -2 m3 2 l-3 2" stroke="#1a1aee" stroke-width="1"/><rect x="15.5" y="14.5" width="8" height="9" fill="#d4d4d4" stroke="#1a1aee" stroke-width="1"/><text x="19.5" y="22" text-anchor="middle" font-size="7" fill="#1a1aee" font-family="Liberation Sans">4</text></g>
<g transform="translate(1879,365)"><rect x="8" y="9" width="14" height="14" fill="#1a1aee"/><rect x="15" y="14" width="15" height="16" fill="#1a1aee"/><circle cx="14" cy="14" r="3.5" fill="#d4d4d4"/><circle cx="23" cy="23" r="4" fill="#d4d4d4"/></g>
<g transform="translate(1759,405)"><path d="M8 30 L19 12 L30 30Z" fill="none" stroke="#f01010" stroke-width="3"/><path d="M7 31 H31" stroke="#1a1aee" stroke-width="3"/><path d="M19 24 v-6 l-2 3 m2 -3 l2 3" stroke="#000" stroke-width="1" fill="none"/></g>
<g transform="translate(1799,405)"><path d="M8 31 L19 6 L30 31" fill="none" stroke="#f01010" stroke-width="2.5"/><path d="M8 31 L19 22 L30 31" fill="none" stroke="#1a1aee" stroke-width="3"/><path d="M19 20 v-6 M17 16 l2 -3 l2 3" stroke="#000" stroke-width="1.2" fill="none"/></g>
<g transform="translate(1839,405)"><path d="M8 28 L14 9 H24 L30 28" fill="none" stroke="#f01010" stroke-width="4"/><path d="M6 27 H32" stroke="#1a1aee" stroke-width="3"/><path d="M6 30 L8 27 M32 30 L30 27" stroke="#1a1aee" stroke-width="3"/><path d="M19 20 v-6 M17 16 l2 -3 l2 3" stroke="#000" stroke-width="1.2" fill="none"/></g>
<g transform="translate(1879,405)"><path d="M8 26 L14 9 H24 L30 26" fill="none" stroke="#f01010" stroke-width="4"/><path d="M5 24.5 H33" stroke="#1a1aee" stroke-width="3"/><path d="M5 22 l5 5 m0 -5 l-5 5 M28 22 l5 5 m0 -5 l-5 5" stroke="#000" stroke-width="1"/><path d="M19 20 v-6 M17 16 l2 -3 l2 3" stroke="#000" stroke-width="1.2" fill="none"/></g>
<g transform="translate(1759,445)"><path transform="translate(14,10)" d="M0 0 L0 15 L4 11 L7.5 18 L10 17 L6.5 10 L12 10 Z" fill="#000"/></g>
<g transform="translate(1799,445)"><rect x="8.5" y="7.5" width="21" height="22" fill="none" stroke="#d81010" stroke-width="2.5"/><path transform="translate(15,11)" d="M0 0 L0 15 L4 11 L7.5 18 L10 17 L6.5 10 L12 10 Z" fill="#000"/></g>
<g transform="translate(1839,445)"><path d="M14 7 H27 L31 11 V27 L27 31 H12 L7 26 V14Z" fill="none" stroke="#d81010" stroke-width="2.5"/><path transform="translate(16,12)" d="M0 0 L0 15 L4 11 L7.5 18 L10 17 L6.5 10 L12 10 Z" fill="#000"/></g>
<g transform="translate(1879,445)"><path d="M8 29 H13 V21 H20 V12 H29" stroke="#000" stroke-width="1" fill="none"/><circle cx="29" cy="10" r="2.8" fill="#20c020"/><circle cx="8" cy="29" r="2.8" fill="#20c020"/><circle cx="9" cy="21" r="2.8" fill="#e01010"/><path transform="translate(20,17)" d="M0 0 L0 15 L4 11 L7.5 18 L10 17 L6.5 10 L12 10 Z" fill="#000"/></g>
</svg>
<!-- ===== Popview window ===== -->
<div class="a" style="left:1035px;top:258px;width:744px;height:684px;background:#0c0c0e;border:1px solid #9a9a9a;border-radius:7px 7px 2px 7px;box-shadow:0 0 0 1px #000"></div>
<div class="a" style="left:1036px;top:259px;width:742px;height:27px;border-radius:6px 6px 0 0;background:linear-gradient(90deg,#1a1d22 0,#0c0e12 20%,#0a0c10 75%,#3a3e44 90%,#23262b 100%)"></div>
<div class="a" style="left:1036px;top:259px;width:742px;height:27px;border-radius:6px 6px 0 0;background:linear-gradient(180deg,rgba(255,255,255,0.08),rgba(0,0,0,0.1))"></div>
<div class="a" style="left:1058px;top:263px;width:90px;height:18px;border-radius:9px;background:rgba(170,175,180,0.75);filter:blur(5px)"></div>
<div class="a" style="left:1043px;top:266px;width:16px;height:14px;background:#fff;border:1px solid #888;border-top:3px solid #10106a"></div>
<svg class="a" style="left:1045px;top:269px" width="12" height="10"><path d="M2 1 L10 9 M10 1 L2 9" stroke="#c8c020" stroke-width="2.2"/></svg>
<div class="a nw" style="left:1064px;top:265px;font-size:13px;color:#101010;text-shadow:0 0 4px #ccc">Popview - 1</div>
<div class="a" style="left:1725px;top:259px;width:47px;height:20px;border:1px solid #8a8a8a;border-top:none;border-radius:0 0 4px 4px;background:linear-gradient(#3a3d42,#1a1c20)"></div>
<div class="a nw" style="left:1742px;top:256px;font-size:17px;font-weight:bold;color:#eee">x</div>
<div class="a" style="left:1041px;top:286px;width:733px;height:650px;border:1px solid #a8a8a8;background:#000"></div>
<div class="a" style="left:1042px;top:287px;width:694px;height:619px;background:#3f7f7a"></div>
<div class="a" style="left:1730px;top:289px;width:5px;height:616px;background:#c4f4ec"></div>
<div class="a" style="left:1735px;top:287px;width:37px;height:618px;background:#000"></div>
<div class="a" style="left:1735px;top:535px;width:35px;height:369px;background:#55cbb0;border-top:1px solid #a8f0e0"></div>
<div class="a" style="left:1736px;top:290px;width:34px;height:34px;background:#9ad4d4;border-top:3px solid #c8f6f0;border-left:3px solid #c8f6f0;border-bottom:3px solid #3f8a7a;border-right:3px solid #3f8a7a"><div class="a" style="left:2px;top:2px;width:24px;height:24px;border:1px solid #000"></div></div>
<div class="a" style="left:1736px;top:325px;width:34px;height:34px;background:#9ad4d4;border-top:3px solid #c8f6f0;border-left:3px solid #c8f6f0;border-bottom:3px solid #3f8a7a;border-right:3px solid #3f8a7a"><div class="a" style="left:2px;top:2px;width:24px;height:24px;border:1px solid #000"></div></div>
<div class="a" style="left:1736px;top:360px;width:34px;height:34px;background:#9ad4d4;border-top:3px solid #c8f6f0;border-left:3px solid #c8f6f0;border-bottom:3px solid #3f8a7a;border-right:3px solid #3f8a7a"><div class="a" style="left:2px;top:2px;width:24px;height:24px;border:1px solid #000"></div></div>
<div class="a" style="left:1736px;top:395px;width:34px;height:34px;background:#9ad4d4;border-top:3px solid #c8f6f0;border-left:3px solid #c8f6f0;border-bottom:3px solid #3f8a7a;border-right:3px solid #3f8a7a"><div class="a" style="left:2px;top:2px;width:24px;height:24px;border:1px solid #000"></div></div>
<div class="a" style="left:1736px;top:430px;width:34px;height:34px;background:#9ad4d4;border-top:3px solid #c8f6f0;border-left:3px solid #c8f6f0;border-bottom:3px solid #3f8a7a;border-right:3px solid #3f8a7a"><div class="a" style="left:2px;top:2px;width:24px;height:24px;border:1px solid #000"></div></div>
<div class="a" style="left:1736px;top:465px;width:34px;height:34px;background:#9ad4d4;border-top:3px solid #c8f6f0;border-left:3px solid #c8f6f0;border-bottom:3px solid #3f8a7a;border-right:3px solid #3f8a7a"><div class="a" style="left:2px;top:2px;width:24px;height:24px;border:1px solid #000"></div></div>
<div class="a" style="left:1736px;top:500px;width:34px;height:34px;background:#9ad4d4;border-top:3px solid #c8f6f0;border-left:3px solid #c8f6f0;border-bottom:3px solid #3f8a7a;border-right:3px solid #3f8a7a"><div class="a" style="left:2px;top:2px;width:24px;height:24px;border:1px solid #000"></div></div>
<div class="a" style="left:1042px;top:902px;width:730px;height:4px;background:#c8f8f0"></div>
<div class="a" style="left:1042px;top:906px;width:730px;height:27px;background:#55cbb0;border-top:1px solid #000"></div>
<div class="a" style="left:1045px;top:908px;width:724px;height:23px;background:#9cd8d8;border-top:3px solid #d8fff8;border-left:3px solid #d8fff8;border-bottom:3px solid #3a8a78;border-right:3px solid #3a8a78"></div>
<div class="a mono nw" style="left:1384px;top:910px;font-size:14.5px;color:#000">Close</div>
<svg class="a" style="left:1046px;top:292px" width="684" height="610" viewBox="1046 292 684 610">
<rect x="1046" y="292" width="684" height="610" fill="#000"/>
<rect x="1054" y="293" width="13" height="13" fill="#449800"/>
<rect x="1074" y="293" width="13" height="13" fill="#449800"/>
<rect x="1094" y="293" width="13" height="13" fill="#449800"/>
<rect x="1114" y="293" width="13" height="13" fill="#449800"/>
<rect x="1134" y="293" width="13" height="13" fill="#449800"/>
<rect x="1154" y="293" width="13" height="13" fill="#449800"/>
<rect x="1174" y="293" width="13" height="13" fill="#449800"/>
<rect x="1054" y="313" width="13" height="13" fill="#449800"/>
<rect x="1074" y="313" width="13" height="13" fill="#449800"/>
<rect x="1094" y="313" width="13" height="13" fill="#449800"/>
<rect x="1114" y="313" width="13" height="13" fill="#449800"/>
<rect x="1134" y="313" width="13" height="13" fill="#449800"/>
<rect x="1154" y="313" width="13" height="13" fill="#449800"/>
<rect x="1174" y="313" width="13" height="13" fill="#449800"/>
<circle cx="1221" cy="310" r="6" fill="#449800"/>
<circle cx="1616" cy="310" r="6" fill="#449800"/>
<rect x="1722" y="293" width="8" height="13" fill="#449800"/><rect x="1722" y="313" width="8" height="13" fill="#449800"/>
<path d="M1046 342.5 H1351.5 V292" fill="none" stroke="#f4f4f4" stroke-width="1.5"/>
<path d="M1552.5 292 V342.5 H1730" fill="none" stroke="#f4f4f4" stroke-width="1.5"/>

<rect x="1359" y="292" width="12" height="610" fill="#449800"/>
<rect x="1385" y="292" width="133" height="610" fill="#449800"/>
<path d="M1046 370 H1299 V378 L1305 384 H1318 V656 H1046Z" fill="#449800"/>
<path d="M1046 723 H1299 V731 L1305 737 H1318 V902 H1046Z" fill="#449800"/>
<path d="M1299 656 V648 L1305 642 H1318 V656Z" fill="#000"/>
<rect x="1318" y="384" width="46" height="254" fill="#c49c04"/>
<path d="M1321 387 H1354" stroke="#ff1010" stroke-width="2.2"/><circle cx="1355" cy="387" r="2.6" fill="#ff1010"/>
<path d="M1321 393.5 H1354" stroke="#ff1010" stroke-width="2.2"/><circle cx="1355" cy="393.5" r="2.6" fill="#ff1010"/>
<path d="M1321 400.0 H1354" stroke="#ff1010" stroke-width="2.2"/><circle cx="1355" cy="400.0" r="2.6" fill="#ff1010"/>
<path d="M1321 406.5 H1354" stroke="#ff1010" stroke-width="2.2"/><circle cx="1355" cy="406.5" r="2.6" fill="#ff1010"/>
<path d="M1321 413.0 H1354" stroke="#ff1010" stroke-width="2.2"/><circle cx="1355" cy="413.0" r="2.6" fill="#ff1010"/>
<path d="M1321 419.5 H1354" stroke="#ff1010" stroke-width="2.2"/><circle cx="1355" cy="419.5" r="2.6" fill="#ff1010"/>
<path d="M1321 426.0 H1354" stroke="#ff1010" stroke-width="2.2"/><circle cx="1355" cy="426.0" r="2.6" fill="#ff1010"/>
<path d="M1321 432.5 H1354" stroke="#ff1010" stroke-width="2.2"/><circle cx="1355" cy="432.5" r="2.6" fill="#ff1010"/>
<path d="M1321 439.0 H1354" stroke="#ff1010" stroke-width="2.2"/><circle cx="1355" cy="439.0" r="2.6" fill="#ff1010"/>
<path d="M1321 445.5 H1354" stroke="#ff1010" stroke-width="2.2"/><circle cx="1355" cy="445.5" r="2.6" fill="#ff1010"/>
<path d="M1321 452.0 H1354" stroke="#ff1010" stroke-width="2.2"/><circle cx="1355" cy="452.0" r="2.6" fill="#ff1010"/>
<path d="M1321 458.5 H1354" stroke="#ff1010" stroke-width="2.2"/><circle cx="1355" cy="458.5" r="2.6" fill="#ff1010"/>
<path d="M1321 465.0 H1354" stroke="#ff1010" stroke-width="2.2"/><circle cx="1355" cy="465.0" r="2.6" fill="#ff1010"/>
<path d="M1321 471.5 H1354" stroke="#ff1010" stroke-width="2.2"/><circle cx="1355" cy="471.5" r="2.6" fill="#ff1010"/>
<path d="M1321 478.0 H1354" stroke="#ff1010" stroke-width="2.2"/><circle cx="1355" cy="478.0" r="2.6" fill="#ff1010"/>
<path d="M1321 484.5 H1354" stroke="#ff1010" stroke-width="2.2"/><circle cx="1355" cy="484.5" r="2.6" fill="#ff1010"/>
<path d="M1321 491.0 H1354" stroke="#ff1010" stroke-width="2.2"/><circle cx="1355" cy="491.0" r="2.6" fill="#ff1010"/>
<path d="M1321 497.5 H1354" stroke="#ff1010" stroke-width="2.2"/><circle cx="1355" cy="497.5" r="2.6" fill="#ff1010"/>
<path d="M1321 504.0 H1354" stroke="#ff1010" stroke-width="2.2"/><circle cx="1355" cy="504.0" r="2.6" fill="#ff1010"/>
<path d="M1321 510.5 H1354" stroke="#ff1010" stroke-width="2.2"/><circle cx="1355" cy="510.5" r="2.6" fill="#ff1010"/>
<path d="M1321 517.0 H1354" stroke="#ff1010" stroke-width="2.2"/><circle cx="1355" cy="517.0" r="2.6" fill="#ff1010"/>
<path d="M1321 523.5 H1354" stroke="#ff1010" stroke-width="2.2"/><circle cx="1355" cy="523.5" r="2.6" fill="#ff1010"/>
<path d="M1321 530.0 H1354" stroke="#ff1010" stroke-width="2.2"/><circle cx="1355" cy="530.0" r="2.6" fill="#ff1010"/>
<path d="M1321 536.5 H1354" stroke="#ff1010" stroke-width="2.2"/><circle cx="1355" cy="536.5" r="2.6" fill="#ff1010"/>
<path d="M1321 543.0 H1354" stroke="#ff1010" stroke-width="2.2"/><circle cx="1355" cy="543.0" r="2.6" fill="#ff1010"/>
<path d="M1321 549.5 H1354" stroke="#ff1010" stroke-width="2.2"/><circle cx="1355" cy="549.5" r="2.6" fill="#ff1010"/>
<path d="M1321 556.0 H1354" stroke="#ff1010" stroke-width="2.2"/><circle cx="1355" cy="556.0" r="2.6" fill="#ff1010"/>
<path d="M1321 562.5 H1354" stroke="#ff1010" stroke-width="2.2"/><circle cx="1355" cy="562.5" r="2.6" fill="#ff1010"/>
<path d="M1321 569.0 H1354" stroke="#ff1010" stroke-width="2.2"/><circle cx="1355" cy="569.0" r="2.6" fill="#ff1010"/>
<path d="M1321 575.5 H1354" stroke="#ff1010" stroke-width="2.2"/><circle cx="1355" cy="575.5" r="2.6" fill="#ff1010"/>
<path d="M1321 582.0 H1354" stroke="#ff1010" stroke-width="2.2"/><circle cx="1355" cy="582.0" r="2.6" fill="#ff1010"/>
<path d="M1321 588.5 H1354" stroke="#ff1010" stroke-width="2.2"/><circle cx="1355" cy="588.5" r="2.6" fill="#ff1010"/>
<path d="M1321 595.0 H1354" stroke="#ff1010" stroke-width="2.2"/><circle cx="1355" cy="595.0" r="2.6" fill="#ff1010"/>
<path d="M1321 601.5 H1354" stroke="#ff1010" stroke-width="2.2"/><circle cx="1355" cy="601.5" r="2.6" fill="#ff1010"/>
<path d="M1321 608.0 H1354" stroke="#ff1010" stroke-width="2.2"/><circle cx="1355" cy="608.0" r="2.6" fill="#ff1010"/>
<path d="M1321 614.5 H1354" stroke="#ff1010" stroke-width="2.2"/><circle cx="1355" cy="614.5" r="2.6" fill="#ff1010"/>
<path d="M1321 621.0 H1354" stroke="#ff1010" stroke-width="2.2"/><circle cx="1355" cy="621.0" r="2.6" fill="#ff1010"/>
<path d="M1321 627.5 H1354" stroke="#ff1010" stroke-width="2.2"/><circle cx="1355" cy="627.5" r="2.6" fill="#ff1010"/>
<path d="M1321 634.0 H1354" stroke="#ff1010" stroke-width="2.2"/><circle cx="1355" cy="634.0" r="2.6" fill="#ff1010"/>
<rect x="1320" y="396" width="3" height="20" fill="#ff1010"/>
<rect x="1320" y="422" width="3" height="20" fill="#ff1010"/>
<rect x="1320" y="448" width="3" height="20" fill="#ff1010"/>
<rect x="1320" y="474" width="3" height="20" fill="#ff1010"/>
<rect x="1320" y="500" width="3" height="20" fill="#ff1010"/>
<rect x="1320" y="526" width="3" height="20" fill="#ff1010"/>
<rect x="1320" y="552" width="3" height="20" fill="#ff1010"/>
<rect x="1320" y="578" width="3" height="20" fill="#ff1010"/>
<rect x="1320" y="604" width="3" height="20" fill="#ff1010"/>
<path d="M1351.5 384 V638" stroke="#a0a0a0" stroke-width="1"/>
<rect x="1318" y="738" width="46" height="164" fill="#c49c04"/>
<path d="M1321 741 H1354" stroke="#ff1010" stroke-width="2.2"/><circle cx="1355" cy="741" r="2.6" fill="#ff1010"/>
<path d="M1321 747.5 H1354" stroke="#ff1010" stroke-width="2.2"/><circle cx="1355" cy="747.5" r="2.6" fill="#ff1010"/>
<path d="M1321 754.0 H1354" stroke="#ff1010" stroke-width="2.2"/><circle cx="1355" cy="754.0" r="2.6" fill="#ff1010"/>
<path d="M1321 760.5 H1354" stroke="#ff1010" stroke-width="2.2"/><circle cx="1355" cy="760.5" r="2.6" fill="#ff1010"/>
<path d="M1321 767.0 H1354" stroke="#ff1010" stroke-width="2.2"/><circle cx="1355" cy="767.0" r="2.6" fill="#ff1010"/>
<path d="M1321 773.5 H1354" stroke="#ff1010" stroke-width="2.2"/><circle cx="1355" cy="773.5" r="2.6" fill="#ff1010"/>
<path d="M1321 780.0 H1354" stroke="#ff1010" stroke-width="2.2"/><circle cx="1355" cy="780.0" r="2.6" fill="#ff1010"/>
<path d="M1321 786.5 H1354" stroke="#ff1010" stroke-width="2.2"/><circle cx="1355" cy="786.5" r="2.6" fill="#ff1010"/>
<path d="M1321 793.0 H1354" stroke="#ff1010" stroke-width="2.2"/><circle cx="1355" cy="793.0" r="2.6" fill="#ff1010"/>
<path d="M1321 799.5 H1354" stroke="#ff1010" stroke-width="2.2"/><circle cx="1355" cy="799.5" r="2.6" fill="#ff1010"/>
<path d="M1321 806.0 H1354" stroke="#ff1010" stroke-width="2.2"/><circle cx="1355" cy="806.0" r="2.6" fill="#ff1010"/>
<path d="M1321 812.5 H1354" stroke="#ff1010" stroke-width="2.2"/><circle cx="1355" cy="812.5" r="2.6" fill="#ff1010"/>
<path d="M1321 819.0 H1354" stroke="#ff1010" stroke-width="2.2"/><circle cx="1355" cy="819.0" r="2.6" fill="#ff1010"/>
<path d="M1321 825.5 H1354" stroke="#ff1010" stroke-width="2.2"/><circle cx="1355" cy="825.5" r="2.6" fill="#ff1010"/>
<path d="M1321 832.0 H1354" stroke="#ff1010" stroke-width="2.2"/><circle cx="1355" cy="832.0" r="2.6" fill="#ff1010"/>
<path d="M1321 838.5 H1354" stroke="#ff1010" stroke-width="2.2"/><circle cx="1355" cy="838.5" r="2.6" fill="#ff1010"/>
<path d="M1321 845.0 H1354" stroke="#ff1010" stroke-width="2.2"/><circle cx="1355" cy="845.0" r="2.6" fill="#ff1010"/>
<path d="M1321 851.5 H1354" stroke="#ff1010" stroke-width="2.2"/><circle cx="1355" cy="851.5" r="2.6" fill="#ff1010"/>
<path d="M1321 858.0 H1354" stroke="#ff1010" stroke-width="2.2"/><circle cx="1355" cy="858.0" r="2.6" fill="#ff1010"/>
<path d="M1321 864.5 H1354" stroke="#ff1010" stroke-width="2.2"/><circle cx="1355" cy="864.5" r="2.6" fill="#ff1010"/>
<path d="M1321 871.0 H1354" stroke="#ff1010" stroke-width="2.2"/><circle cx="1355" cy="871.0" r="2.6" fill="#ff1010"/>
<path d="M1321 877.5 H1354" stroke="#ff1010" stroke-width="2.2"/><circle cx="1355" cy="877.5" r="2.6" fill="#ff1010"/>
<path d="M1321 884.0 H1354" stroke="#ff1010" stroke-width="2.2"/><circle cx="1355" cy="884.0" r="2.6" fill="#ff1010"/>
<path d="M1321 890.5 H1354" stroke="#ff1010" stroke-width="2.2"/><circle cx="1355" cy="890.5" r="2.6" fill="#ff1010"/>
<path d="M1321 897.0 H1354" stroke="#ff1010" stroke-width="2.2"/><circle cx="1355" cy="897.0" r="2.6" fill="#ff1010"/>
<rect x="1320" y="750" width="3" height="20" fill="#ff1010"/>
<rect x="1320" y="776" width="3" height="20" fill="#ff1010"/>
<rect x="1320" y="802" width="3" height="20" fill="#ff1010"/>
<rect x="1320" y="828" width="3" height="20" fill="#ff1010"/>
<rect x="1320" y="854" width="3" height="20" fill="#ff1010"/>
<rect x="1320" y="880" width="3" height="20" fill="#ff1010"/>
<path d="M1351.5 738 V902" stroke="#a0a0a0" stroke-width="1"/>
<rect x="1319" y="578" width="34" height="34" fill="#ff1010"/>
<rect x="1321" y="384" width="33" height="6" fill="#ff1010"/>
<path d="M1046 370.5 H1299.5 V378 L1305 384 H1351.5" fill="none" stroke="#f4f4f4" stroke-width="1.5"/>
<path d="M1046 656 H1299.5 V648 L1305 643 H1351.5" fill="none" stroke="#f4f4f4" stroke-width="1.5"/>
<path d="M1046 723.5 H1299.5 V731 L1305 737 H1351.5" fill="none" stroke="#f4f4f4" stroke-width="1.5"/>
<path d="M1340 646 L1360 666 M1360 646 L1340 666" stroke="#f4f4f4" stroke-width="1"/>
<rect x="1552" y="370" width="178" height="286" fill="#449800"/>
<path d="M1552.5 656 V370.5 H1730" fill="none" stroke="#f4f4f4" stroke-width="1.5"/>
<path d="M1552 490 A23 23 0 0 1 1552 536Z" fill="#000" stroke="#f4f4f4" stroke-width="1.5"/>
<rect x="1546" y="489" width="6" height="48" fill="#000"/>
<rect x="1552" y="723" width="178" height="179" fill="#449800"/>
<path d="M1552.5 902 V723.5 H1730" fill="none" stroke="#f4f4f4" stroke-width="1.5"/>
<path d="M1552 843 A23 23 0 0 1 1552 889Z" fill="#000" stroke="#f4f4f4" stroke-width="1.5"/>
<rect x="1546" y="842" width="6" height="48" fill="#000"/>
<path d="M1552 655.5 H1730" stroke="#f4f4f4" stroke-width="1.5"/>
<g transform="translate(0,0)"><circle cx="1068" cy="405" r="18" fill="#000"/><circle cx="1185" cy="405" r="18" fill="#000"/><path d="M1046 388 H1089 V405 H1152 V371" fill="none" stroke="#000" stroke-width="2"/><circle cx="1246" cy="388" r="12" fill="none" stroke="#000" stroke-width="2"/><circle cx="1280" cy="388" r="12" fill="none" stroke="#000" stroke-width="2"/><ellipse cx="1115" cy="433" rx="9.5" ry="6.5" fill="none" stroke="#000" stroke-width="2"/><ellipse cx="1115" cy="450" rx="9.5" ry="6.5" fill="none" stroke="#000" stroke-width="2"/><ellipse cx="1115" cy="467" rx="9.5" ry="6.5" fill="none" stroke="#000" stroke-width="2"/><ellipse cx="1115" cy="484" rx="9.5" ry="6.5" fill="none" stroke="#000" stroke-width="2"/><ellipse cx="1115" cy="500" rx="9.5" ry="6.5" fill="none" stroke="#000" stroke-width="2"/><ellipse cx="1115" cy="517" rx="9.5" ry="6.5" fill="none" stroke="#000" stroke-width="2"/><ellipse cx="1137.5" cy="441" rx="9.5" ry="6.5" fill="none" stroke="#000" stroke-width="2"/><ellipse cx="1137.5" cy="458" rx="9.5" ry="6.5" fill="none" stroke="#000" stroke-width="2"/><ellipse cx="1137.5" cy="475" rx="9.5" ry="6.5" fill="none" stroke="#000" stroke-width="2"/><ellipse cx="1137.5" cy="492" rx="9.5" ry="6.5" fill="none" stroke="#000" stroke-width="2"/><ellipse cx="1137.5" cy="509" rx="9.5" ry="6.5" fill="none" stroke="#000" stroke-width="2"/><path d="M1124 444 H1145 L1220.5 519.5 H1318" fill="none" stroke="#000" stroke-width="1.8"/><path d="M1124 452 H1145 L1220 527 H1318" fill="none" stroke="#000" stroke-width="1.8"/><path d="M1124 478 H1145 L1206 539 H1318" fill="none" stroke="#000" stroke-width="1.8"/><path d="M1124 486 H1145 L1206 547 H1318" fill="none" stroke="#000" stroke-width="1.8"/><path d="M1124 511 H1145 L1192.5 558.5 H1318" fill="none" stroke="#000" stroke-width="1.8"/><path d="M1124 519 H1145 L1192 566 H1318" fill="none" stroke="#000" stroke-width="1.8"/><circle cx="1204" cy="467" r="4" fill="none" stroke="#000" stroke-width="1.6"/><circle cx="1204" cy="482" r="4" fill="none" stroke="#000" stroke-width="1.6"/><circle cx="1220" cy="467" r="4" fill="none" stroke="#000" stroke-width="1.6"/><circle cx="1220" cy="482" r="4" fill="none" stroke="#000" stroke-width="1.6"/><circle cx="1236" cy="467" r="4" fill="none" stroke="#000" stroke-width="1.6"/><circle cx="1236" cy="482" r="4" fill="none" stroke="#000" stroke-width="1.6"/><circle cx="1252" cy="467" r="4" fill="none" stroke="#000" stroke-width="1.6"/><circle cx="1252" cy="482" r="4" fill="none" stroke="#000" stroke-width="1.6"/><circle cx="1268" cy="467" r="4" fill="none" stroke="#000" stroke-width="1.6"/><circle cx="1268" cy="482" r="4" fill="none" stroke="#000" stroke-width="1.6"/><circle cx="1284" cy="467" r="4" fill="none" stroke="#000" stroke-width="1.6"/><circle cx="1284" cy="482" r="4" fill="none" stroke="#000" stroke-width="1.6"/><path d="M1046 527 H1115 M1046 554.5 H1125" stroke="#000" stroke-width="2"/><path d="M1046 542 H1110 Q1125 542 1130 535 Q1135 530 1146 533" stroke="#000" stroke-width="6" fill="none"/><path d="M1131 548 H1150 V571 H1169 V545" fill="none" stroke="#000" stroke-width="2"/><ellipse cx="1115" cy="567" rx="9.5" ry="6.5" fill="none" stroke="#000" stroke-width="2"/><ellipse cx="1115" cy="584" rx="9.5" ry="6.5" fill="none" stroke="#000" stroke-width="2"/><ellipse cx="1137.5" cy="558" rx="9.5" ry="6.5" fill="none" stroke="#000" stroke-width="2"/><ellipse cx="1137.5" cy="575" rx="9.5" ry="6.5" fill="none" stroke="#000" stroke-width="2"/><ellipse cx="1137.5" cy="592" rx="9.5" ry="6.5" fill="none" stroke="#000" stroke-width="2"/><rect x="1226" y="579" width="36" height="12" fill="none" stroke="#000" stroke-width="2"/><rect x="1240" y="579" width="7" height="12" fill="#000"/><circle cx="1277" cy="586" r="4.5" fill="none" stroke="#000" stroke-width="2"/><path d="M1262 585 H1273" stroke="#000" stroke-width="2"/><circle cx="1233" cy="601" r="4" fill="none" stroke="#000" stroke-width="1.6"/><circle cx="1247" cy="601" r="4" fill="none" stroke="#000" stroke-width="1.6"/><circle cx="1261" cy="601" r="4" fill="none" stroke="#000" stroke-width="1.6"/><circle cx="1275" cy="601" r="4" fill="none" stroke="#000" stroke-width="1.6"/><circle cx="1289" cy="601" r="4" fill="none" stroke="#000" stroke-width="1.6"/><rect x="1262" y="611" width="33" height="46" fill="none" stroke="#000" stroke-width="2"/><circle cx="1068" cy="620" r="18" fill="#000"/><circle cx="1185" cy="620" r="18" fill="#000"/><path d="M1318 580 H1310 A11 11 0 0 0 1310 603 H1318Z" fill="#000" stroke="#f4f4f4" stroke-width="1.2"/></g>
<g transform="translate(0,353)"><circle cx="1068" cy="405" r="18" fill="#000"/><circle cx="1185" cy="405" r="18" fill="#000"/><path d="M1046 388 H1089 V405 H1152 V371" fill="none" stroke="#000" stroke-width="2"/><circle cx="1246" cy="388" r="12" fill="none" stroke="#000" stroke-width="2"/><circle cx="1280" cy="388" r="12" fill="none" stroke="#000" stroke-width="2"/><ellipse cx="1115" cy="433" rx="9.5" ry="6.5" fill="none" stroke="#000" stroke-width="2"/><ellipse cx="1115" cy="450" rx="9.5" ry="6.5" fill="none" stroke="#000" stroke-width="2"/><ellipse cx="1115" cy="467" rx="9.5" ry="6.5" fill="none" stroke="#000" stroke-width="2"/><ellipse cx="1115" cy="484" rx="9.5" ry="6.5" fill="none" stroke="#000" stroke-width="2"/><ellipse cx="1115" cy="500" rx="9.5" ry="6.5" fill="none" stroke="#000" stroke-width="2"/><ellipse cx="1115" cy="517" rx="9.5" ry="6.5" fill="none" stroke="#000" stroke-width="2"/><ellipse cx="1137.5" cy="441" rx="9.5" ry="6.5" fill="none" stroke="#000" stroke-width="2"/><ellipse cx="1137.5" cy="458" rx="9.5" ry="6.5" fill="none" stroke="#000" stroke-width="2"/><ellipse cx="1137.5" cy="475" rx="9.5" ry="6.5" fill="none" stroke="#000" stroke-width="2"/><ellipse cx="1137.5" cy="492" rx="9.5" ry="6.5" fill="none" stroke="#000" stroke-width="2"/><ellipse cx="1137.5" cy="509" rx="9.5" ry="6.5" fill="none" stroke="#000" stroke-width="2"/><path d="M1124 444 H1145 L1220.5 519.5 H1318" fill="none" stroke="#000" stroke-width="1.8"/><path d="M1124 452 H1145 L1220 527 H1318" fill="none" stroke="#000" stroke-width="1.8"/><path d="M1124 478 H1145 L1206 539 H1318" fill="none" stroke="#000" stroke-width="1.8"/><path d="M1124 486 H1145 L1206 547 H1318" fill="none" stroke="#000" stroke-width="1.8"/><path d="M1124 511 H1145 L1192.5 558.5 H1318" fill="none" stroke="#000" stroke-width="1.8"/><path d="M1124 519 H1145 L1192 566 H1318" fill="none" stroke="#000" stroke-width="1.8"/><circle cx="1204" cy="467" r="4" fill="none" stroke="#000" stroke-width="1.6"/><circle cx="1204" cy="482" r="4" fill="none" stroke="#000" stroke-width="1.6"/><circle cx="1220" cy="467" r="4" fill="none" stroke="#000" stroke-width="1.6"/><circle cx="1220" cy="482" r="4" fill="none" stroke="#000" stroke-width="1.6"/><circle cx="1236" cy="467" r="4" fill="none" stroke="#000" stroke-width="1.6"/><circle cx="1236" cy="482" r="4" fill="none" stroke="#000" stroke-width="1.6"/><circle cx="1252" cy="467" r="4" fill="none" stroke="#000" stroke-width="1.6"/><circle cx="1252" cy="482" r="4" fill="none" stroke="#000" stroke-width="1.6"/><circle cx="1268" cy="467" r="4" fill="none" stroke="#000" stroke-width="1.6"/><circle cx="1268" cy="482" r="4" fill="none" stroke="#000" stroke-width="1.6"/><circle cx="1284" cy="467" r="4" fill="none" stroke="#000" stroke-width="1.6"/><circle cx="1284" cy="482" r="4" fill="none" stroke="#000" stroke-width="1.6"/><path d="M1046 527 H1115 M1046 554.5 H1125" stroke="#000" stroke-width="2"/><path d="M1046 542 H1110 Q1125 542 1130 535 Q1135 530 1146 533" stroke="#000" stroke-width="6" fill="none"/><path d="M1131 548 H1150 V571 H1169 V545" fill="none" stroke="#000" stroke-width="2"/><ellipse cx="1115" cy="567" rx="9.5" ry="6.5" fill="none" stroke="#000" stroke-width="2"/><ellipse cx="1115" cy="584" rx="9.5" ry="6.5" fill="none" stroke="#000" stroke-width="2"/><ellipse cx="1137.5" cy="558" rx="9.5" ry="6.5" fill="none" stroke="#000" stroke-width="2"/><ellipse cx="1137.5" cy="575" rx="9.5" ry="6.5" fill="none" stroke="#000" stroke-width="2"/><ellipse cx="1137.5" cy="592" rx="9.5" ry="6.5" fill="none" stroke="#000" stroke-width="2"/><rect x="1226" y="579" width="36" height="12" fill="none" stroke="#000" stroke-width="2"/><rect x="1240" y="579" width="7" height="12" fill="#000"/><circle cx="1277" cy="586" r="4.5" fill="none" stroke="#000" stroke-width="2"/><path d="M1262 585 H1273" stroke="#000" stroke-width="2"/><circle cx="1233" cy="601" r="4" fill="none" stroke="#000" stroke-width="1.6"/><circle cx="1247" cy="601" r="4" fill="none" stroke="#000" stroke-width="1.6"/><circle cx="1261" cy="601" r="4" fill="none" stroke="#000" stroke-width="1.6"/><circle cx="1275" cy="601" r="4" fill="none" stroke="#000" stroke-width="1.6"/><circle cx="1289" cy="601" r="4" fill="none" stroke="#000" stroke-width="1.6"/><rect x="1262" y="611" width="33" height="46" fill="none" stroke="#000" stroke-width="2"/><circle cx="1068" cy="620" r="18" fill="#000"/><circle cx="1185" cy="620" r="18" fill="#000"/><path d="M1318 580 H1310 A11 11 0 0 0 1310 603 H1318Z" fill="#000" stroke="#f4f4f4" stroke-width="1.2"/></g>
<path d="M1046 293 H1730 M1047.5 292 V902" stroke="#fff" stroke-width="1.5" stroke-dasharray="6 4" fill="none"/>
</svg>
<svg class="a" style="left:1290px;top:175px" width="70" height="140" viewBox="1290 175 70 140"><path d="M1297 183 L1338 287" stroke="#e81010" stroke-width="3.5"/><path d="M1348 308 L1327 283 L1347 277Z" fill="#e81010"/></svg>
<svg class="a" style="left:1736px;top:290px" width="34" height="245" viewBox="0 0 34 245">
<g transform="translate(0,0)"><rect x="10" y="12" width="11" height="12" fill="#000"/><rect x="12" y="15" width="7" height="6" fill="#9ad4d4"/><path d="M18 18 h-5 m2 -2 l-2 2 l2 2" stroke="#000" stroke-width="1" fill="none"/><rect x="20.5" y="8.5" width="6" height="6" fill="none" stroke="#000" stroke-width="1.2"/><path d="M21 18 h3 v-3" stroke="#000" stroke-width="1.2" fill="none"/></g>
<g transform="translate(0,35)"><rect x="11" y="14" width="12" height="10" fill="none" stroke="#000" stroke-width="2.5"/><path d="M17 6 L22 11 H20 V17 H14 V11 H12Z" fill="#000"/></g>
<g transform="translate(0,70)"><rect x="11" y="9" width="12" height="10" fill="none" stroke="#000" stroke-width="2.5"/><path d="M17 28 L22 23 H20 V17 H14 V23 H12Z" fill="#000"/></g>
<g transform="translate(0,105)"><rect x="14" y="10" width="11" height="14" fill="none" stroke="#000" stroke-width="2.5"/><path d="M7 17 L12 12 V15 H17 V19 H12 V22Z" fill="#000"/></g>
<g transform="translate(0,140)"><rect x="9" y="10" width="11" height="14" fill="none" stroke="#000" stroke-width="2.5"/><path d="M27 17 L22 12 V15 H17 V19 H22 V22Z" fill="#000"/></g>
<g transform="translate(0,175)"><rect x="13" y="13" width="8" height="8" fill="none" stroke="#000" stroke-width="2"/><path d="M13 6 H21 L17 10Z M13 28 H21 L17 24Z M6 13 V21 L10 17Z M28 13 V21 L24 17Z" fill="#000"/><path d="M7 7 l5 5 M27 7 l-5 5 M7 27 l5 -5 M27 27 l-5 -5" stroke="#000" stroke-width="1"/></g>
<g transform="translate(0,210)"><rect x="14" y="14" width="6" height="6" fill="none" stroke="#000" stroke-width="1.5"/><path d="M13 11 H21 L17 6Z M13 23 H21 L17 28Z M11 13 V21 L6 17Z M23 13 V21 L28 17Z" fill="#000"/></g>
</svg>
</body></html>
